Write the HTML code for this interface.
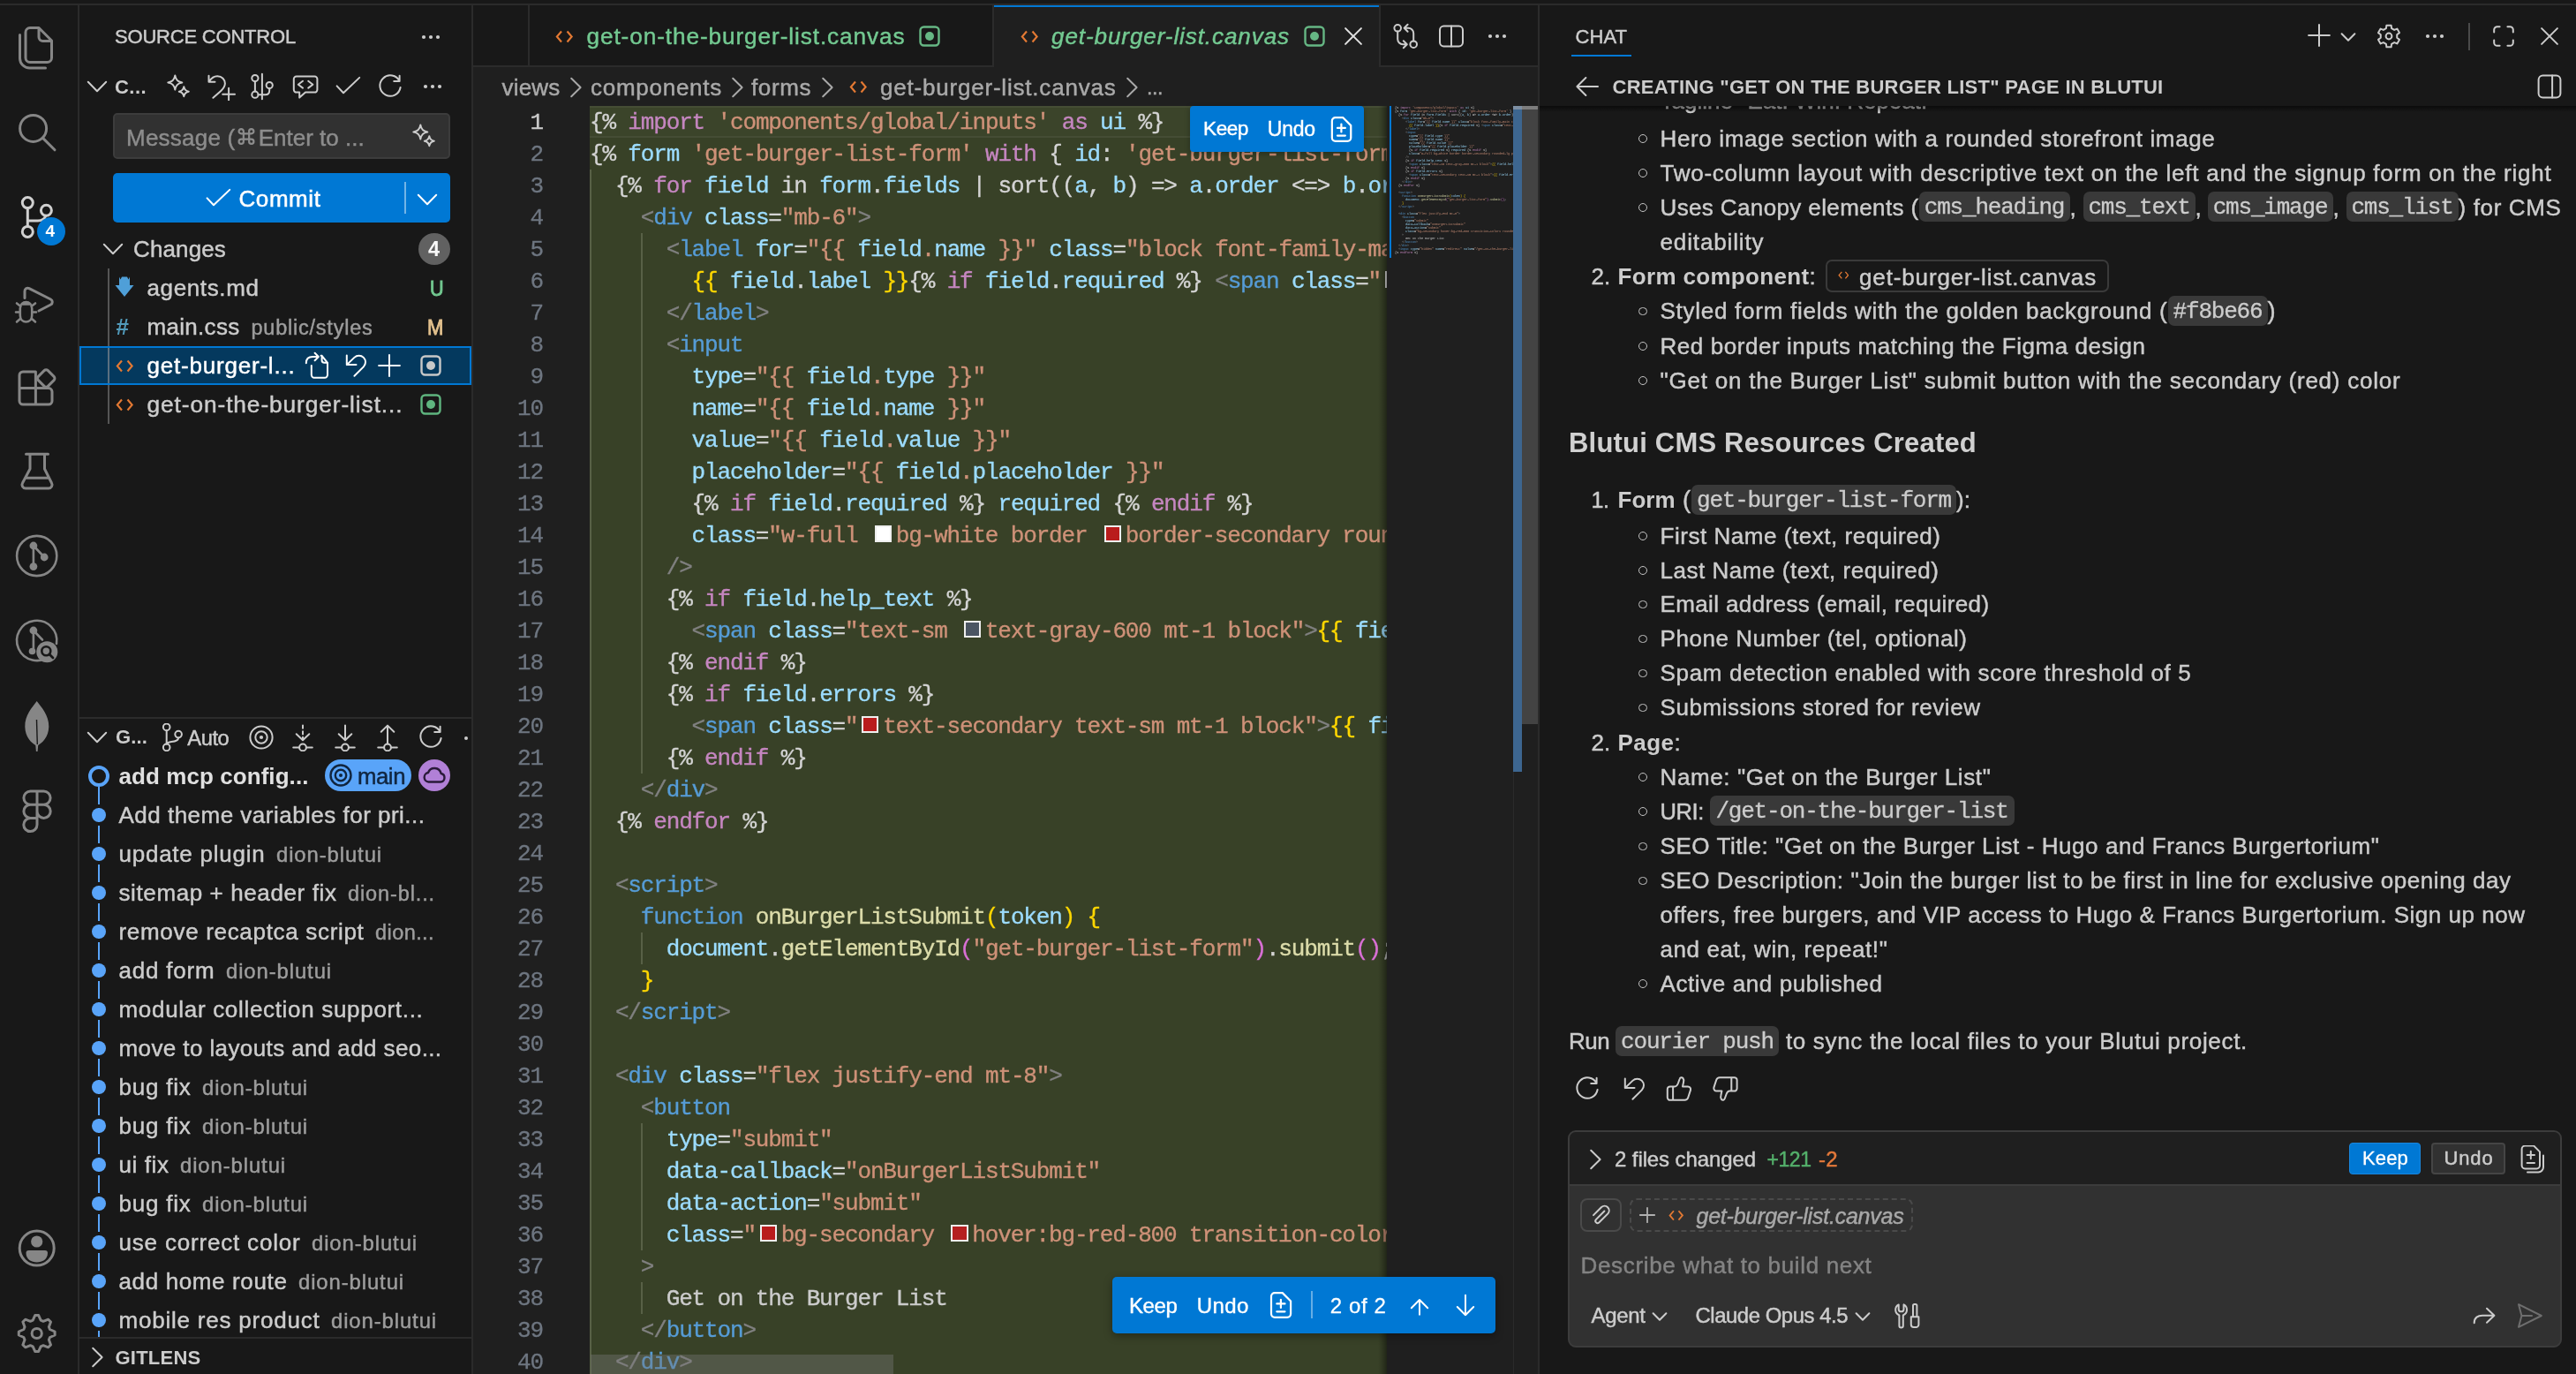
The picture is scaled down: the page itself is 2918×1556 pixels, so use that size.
<!DOCTYPE html>
<html lang="en"><head><meta charset="utf-8"><title>VS Code</title><style>
html,body{margin:0;padding:0;background:#181818;}
body{width:2918px;height:1556px;overflow:hidden;font-family:'Liberation Sans', sans-serif;}
#root{position:relative;width:2918px;height:1556px;overflow:hidden;background:#181818;will-change:transform;}
#root div,#root span.t,#root svg{position:absolute;box-sizing:border-box;}
#root span.t{display:block;}
#root .rel,#root .rel *{position:static;}
.cd{color:#d4d4d4}.ck{color:#c586c0}.cs{color:#ce9178}.cv{color:#9cdcfe}.cp{color:#d4d4d4}.ct{color:#569cd6}.cb{color:#808080}.ca{color:#9cdcfe}.cy{color:#ffd700}.cf{color:#dcdcaa}.cm{color:#da70d6}.cw{color:#cccccc}.ck2{color:#d4d4d4}.cl{left:668px;height:36px;line-height:36px;font-size:26px;letter-spacing:-1.152px;white-space:pre;-webkit-text-stroke:0.35px;font-family:'Liberation Mono', monospace;overflow:hidden;width:903px;}.bx{display:inline-block;width:19.2px;height:19.2px;margin:0 4.8px;border:2.4px solid #eee;box-sizing:border-box;vertical-align:0px;}.ln{left:536px;width:79px;height:36px;line-height:36px;font-size:26px;letter-spacing:-1.152px;text-align:right;color:#6e7681;font-family:'Liberation Mono', monospace;-webkit-text-stroke:0.3px;}.chip{background:#393939;border-radius:7px;height:34px;}.mono{font-family:'Liberation Mono', monospace;}</style></head>
<body><div id="root">
<div style="left:0px;top:0px;width:2918px;height:4px;background:#181818;"></div><div style="left:0px;top:4px;width:2918px;height:2px;background:#2b2b2b;"></div><div style="left:88px;top:6px;width:2px;height:1550px;background:#2b2b2b;"></div><div style="left:534px;top:6px;width:2px;height:1550px;background:#2b2b2b;"></div><div style="left:536px;top:6px;width:1206px;height:68px;background:#181818;"></div><div style="left:536px;top:74px;width:1206px;height:2px;background:#2b2b2b;"></div><div style="left:536px;top:76px;width:1206px;height:1480px;background:#1f1f1f;"></div><div style="left:1742px;top:6px;width:2px;height:1550px;background:#2b2b2b;"></div><svg style="left:0px;top:0px;" width="88" height="1556" viewBox="0 0 88 1556" fill="none"><path d="M44 31.5 H34 A5 5 0 0 0 29 36.5 V65.5 A5 5 0 0 0 34 70.5 H53.5 A5 5 0 0 0 58.5 65.5 V46 L44 31.5 V42 A4.5 4.5 0 0 0 48.5 46.5 H58" stroke="#868686" stroke-width="3" stroke-linecap="round" stroke-linejoin="round" fill="none"/><path d="M22.5 39.5 V66 A11 11 0 0 0 33.5 77 H51.5" stroke="#868686" stroke-width="3" stroke-linecap="round" stroke-linejoin="round" fill="none"/><circle cx="37.6" cy="145.4" r="15" stroke="#868686" stroke-width="3" stroke-linecap="round" stroke-linejoin="round" fill="none"/><path d="M48.8 156.6 L62 169.8" stroke="#868686" stroke-width="3" stroke-linecap="round" stroke-linejoin="round" fill="none"/><circle cx="31.3" cy="229.6" r="6" stroke="#d0d0d0" stroke-width="3" stroke-linecap="round" stroke-linejoin="round" fill="none"/><circle cx="31.3" cy="262.4" r="6" stroke="#d0d0d0" stroke-width="3" stroke-linecap="round" stroke-linejoin="round" fill="none"/><circle cx="52.4" cy="238.3" r="6" stroke="#d0d0d0" stroke-width="3" stroke-linecap="round" stroke-linejoin="round" fill="none"/><path d="M31.3 235.6 V256.4 M31.3 250 H43 C48 250 50.5 248 52 244.3" stroke="#d0d0d0" stroke-width="3" stroke-linecap="round" stroke-linejoin="round" fill="none"/><path d="M28 337.5 V330 A3.5 3.5 0 0 1 33 326.6 L57.5 339 A3.4 3.4 0 0 1 57.5 345 L44 352" stroke="#868686" stroke-width="3" stroke-linecap="round" stroke-linejoin="round" fill="none"/><path d="M22.8 349.5 C22.8 339.5 36.2 339.5 36.2 349.5 V357 C36.2 367 22.8 367 22.8 357 Z M24.5 344.5 H34.5 M22.8 353.5 H18 M36.2 353.5 H41 M23.5 347 L19 343.5 M35.5 347 L40 343.5 M23.5 360.5 L19 364.5 M35.5 360.5 L40 364.5" stroke="#868686" stroke-width="2.6" stroke-linecap="round" stroke-linejoin="round" fill="none"/><path d="M40.4 421 H26 A4 4 0 0 0 22 425 V454 A4 4 0 0 0 26 458 H55 A4 4 0 0 0 59 454 V443.5 A4 4 0 0 0 55 439.6 H22 M40.4 421 V458" stroke="#868686" stroke-width="3" stroke-linecap="round" stroke-linejoin="round" fill="none"/><rect x="44.5" y="420.8" width="15.5" height="15.5" rx="3" transform="rotate(45 52.3 428.5)" stroke="#868686" stroke-width="3" stroke-linecap="round" stroke-linejoin="round" fill="none"/><path d="M29.5 514.3 H54.5 M34 514.3 V531 L25.5 547 A4 4 0 0 0 29 553 H55 A4 4 0 0 0 58.5 547 L50.5 531 V514.3 M29.5 541.2 H54.5" stroke="#868686" stroke-width="3" stroke-linecap="round" stroke-linejoin="round" fill="none"/><circle cx="41.7" cy="629.5" r="22.6" stroke="#868686" stroke-width="2.6" fill="none" stroke-linecap="round"/><circle cx="37.9" cy="618" r="4.4" fill="#868686"/><circle cx="37.9" cy="641.6" r="4.4" fill="#868686"/><circle cx="50.2" cy="631" r="4.4" fill="#868686"/><path d="M37.9 618 V641.6 M37.9 618 L50.2 631" stroke="#868686" stroke-width="2.6" fill="none" stroke-linecap="round"/><path d="M56.5 742.5 A22.6 22.6 0 1 1 64 729" stroke="#868686" stroke-width="2.6" fill="none" stroke-linecap="round" transform="rotate(0)"/><circle cx="37.9" cy="714" r="4.4" fill="#868686"/><circle cx="36.5" cy="737.5" r="3.8" fill="#868686"/><path d="M37.9 714 V737 M37.9 714 L48 724.5" stroke="#868686" stroke-width="2.6" fill="none" stroke-linecap="round"/><circle cx="53.3" cy="738.2" r="12" fill="#868686"/><circle cx="52.3" cy="737.2" r="5" stroke="#181818" stroke-width="2.6" fill="none"/><path d="M56 741 L60 745" stroke="#181818" stroke-width="2.8" stroke-linecap="round"/><path d="M41.7 794 C47 801 55.5 810 55.3 823 C55 835 47.5 841.5 43.2 844 L42.6 851 H40.9 L40.3 844 C36 841.5 28.5 835 28.3 823 C28 810 36.5 801 41.7 794 Z" fill="#868686"/><path d="M41.5 815 L42.3 843" stroke="#181818" stroke-width="1.4"/><path d="M42 896 H34.5 A7.6 7.6 0 0 0 34.5 911.2 A7.6 7.6 0 0 0 34.5 926.4 A7.6 7.6 0 1 0 42 934 V896 H49.5 A7.6 7.6 0 0 1 49.5 911.2 H34.5 M42 926.4 H34.5 M49.5 911.2 A7.6 7.6 0 1 1 42 918.8" stroke="#868686" stroke-width="3" fill="none" stroke-linejoin="round"/><circle cx="41.7" cy="1413.6" r="19.5" stroke="#868686" stroke-width="3" stroke-linecap="round" stroke-linejoin="round" fill="none"/><circle cx="41.7" cy="1406" r="6.6" fill="#868686"/><path d="M29.5 1419 A3 3 0 0 1 32.5 1416 H51 A3 3 0 0 1 54 1419 C54 1426 48 1429.5 41.7 1429.5 C35.5 1429.5 29.5 1426 29.5 1419 Z" fill="#868686"/><path d="M39.7 1489.6 L43.7 1489.6 L46.2 1495.2 L49.0 1496.3 L54.7 1494.2 L57.5 1497.0 L55.4 1502.7 L56.5 1505.5 L62.1 1508.0 L62.1 1512.0 L56.5 1514.5 L55.4 1517.3 L57.5 1523.0 L54.7 1525.8 L49.0 1523.7 L46.2 1524.8 L43.7 1530.4 L39.7 1530.4 L37.2 1524.8 L34.4 1523.7 L28.7 1525.8 L25.9 1523.0 L28.0 1517.3 L26.9 1514.5 L21.3 1512.0 L21.3 1508.0 L26.9 1505.5 L28.0 1502.7 L25.9 1497.0 L28.7 1494.2 L34.4 1496.3 L37.2 1495.2 Z" stroke="#868686" stroke-width="3" stroke-linecap="round" stroke-linejoin="round" fill="none" stroke-linejoin="round"/><circle cx="41.7" cy="1510" r="5.6" stroke="#868686" stroke-width="3" stroke-linecap="round" stroke-linejoin="round" fill="none"/></svg><div style="left:42px;top:246px;width:32px;height:32px;border-radius:16px;background:#0078d4;"></div><span class="t" style="left:51.5px;top:250px;font-size:19px;line-height:24px;color:#fff;font-family:'Liberation Sans', sans-serif;white-space:pre;font-weight:700;">4</span><span class="t" style="left:130px;top:26.5px;font-size:22px;line-height:30px;color:#cccccc;font-family:'Liberation Sans', sans-serif;white-space:pre;-webkit-text-stroke:0.45px #cccccc;letter-spacing:-0.200px;">SOURCE CONTROL</span><svg style="left:472.0px;top:25.5px;" width="32" height="32" viewBox="0 0 16 16" fill="none"><circle cx="4" cy="8" r="1.05" fill="#cccccc"/><circle cx="8" cy="8" r="1.05" fill="#cccccc"/><circle cx="12" cy="8" r="1.05" fill="#cccccc"/></svg><svg style="left:94.0px;top:82.3px;" width="32" height="32" viewBox="0 0 16 16" fill="none"><path d="M2.9 5.4 L8 10.6 L13.1 5.4" stroke="#cccccc" stroke-width="1" stroke-linecap="round" stroke-linejoin="round"/></svg><span class="t" style="left:130px;top:83.5px;font-size:22px;line-height:30px;color:#cccccc;font-family:'Liberation Sans', sans-serif;white-space:pre;font-weight:700;letter-spacing:0.441px;">C...</span><svg style="left:185.7px;top:82.3px;" width="32" height="32" viewBox="0 0 16 16" fill="none"><path d="M6.15 1.75 C6.6 4.3 7.6 5.3 10.15 5.75 C7.6 6.2 6.6 7.2 6.15 9.75 C5.7 7.2 4.7 6.2 2.15 5.75 C4.7 5.3 5.7 4.3 6.15 1.75 Z M11.15 8.1 C11.45 9.9 12.1 10.55 13.9 10.85 C12.1 11.15 11.45 11.8 11.15 13.6 C10.85 11.8 10.2 11.15 8.4 10.85 C10.2 10.55 10.85 9.9 11.15 8.1 Z" stroke="#cccccc" stroke-width="1" stroke-linecap="round" stroke-linejoin="round"/></svg><svg style="left:234.9px;top:82.3px;" width="32" height="32" viewBox="0 0 16 16" fill="none"><path d="M0.75 1.85 V5.35 H4.25 M1 5.1 C2.2 3.2 3.6 2.1 5.6 2.1 C8.2 2.1 9.95 4 9.95 6.3 C9.95 8.2 8.9 9.3 7.6 10.5 L3.2 14.4 M12.05 8.9 V15.8 M8.6 12.35 H15.5" stroke="#cccccc" stroke-width="1" stroke-linecap="round" stroke-linejoin="round"/></svg><svg style="left:280.9px;top:82.3px;" width="32" height="32" viewBox="0 0 16 16" fill="none"><circle cx="3.95" cy="3.3" r="1.8" stroke="#cccccc" stroke-width="1" stroke-linecap="round" stroke-linejoin="round"/><circle cx="3.95" cy="12.6" r="1.8" stroke="#cccccc" stroke-width="1" stroke-linecap="round" stroke-linejoin="round"/><circle cx="12.1" cy="7.25" r="1.8" stroke="#cccccc" stroke-width="1" stroke-linecap="round" stroke-linejoin="round"/><path d="M3.95 5.1 V10.8 M7.95 0.85 V15.15 M12.1 9.05 V10.2 C12.1 11.6 11.2 12.6 9.8 12.6 H5.75" stroke="#cccccc" stroke-width="1" stroke-linecap="round" stroke-linejoin="round"/></svg><svg style="left:330.0px;top:82.3px;" width="32" height="32" viewBox="0 0 16 16" fill="none"><path d="M2.9 2.25 H13.2 A1.5 1.5 0 0 1 14.7 3.75 V9.8 A1.5 1.5 0 0 1 13.2 11.3 H8 L4.6 14.3 V11.3 H2.9 A1.5 1.5 0 0 1 1.4 9.8 V3.75 A1.5 1.5 0 0 1 2.9 2.25 Z M6.5 4.9 L3.9 6.85 L6.5 8.8 M9.6 4.9 L12.2 6.85 L9.6 8.8" stroke="#cccccc" stroke-width="1" stroke-linecap="round" stroke-linejoin="round"/></svg><svg style="left:377.7px;top:82.3px;" width="32" height="32" viewBox="0 0 16 16" fill="none"><path d="M1.8 7.7 L5.5 11.65 L14.6 2.95" stroke="#cccccc" stroke-width="1" stroke-linecap="round" stroke-linejoin="round"/></svg><svg style="left:425.9px;top:82.3px;" width="32" height="32" viewBox="0 0 16 16" fill="none"><path d="M13.8 8.5 A5.85 5.85 0 1 1 13.3 5 M13.3 1.9 V5 H10.1" stroke="#cccccc" stroke-width="1" stroke-linecap="round" stroke-linejoin="round"/></svg><svg style="left:474.0px;top:82.3px;" width="32" height="32" viewBox="0 0 16 16" fill="none"><circle cx="4" cy="8" r="1.05" fill="#cccccc"/><circle cx="8" cy="8" r="1.05" fill="#cccccc"/><circle cx="12" cy="8" r="1.05" fill="#cccccc"/></svg><div style="left:128px;top:128px;width:382px;height:52px;background:#313131;border:2px solid #3c3c3c;border-radius:5px;"></div><span class="t" style="left:143px;top:138.5px;font-size:26px;line-height:34px;color:#8c8c8c;font-family:'Liberation Sans', sans-serif;white-space:pre;-webkit-text-stroke:0.45px #8c8c8c;letter-spacing:0.234px;">Message (</span><svg style="left:268.3px;top:144px;" width="22" height="21" viewBox="0 0 20 20" fill="none"><path d="M7 7 H13 V13 H7 Z M7 7 V4.5 A2.5 2.5 0 1 0 4.5 7 H7 M13 7 H15.5 A2.5 2.5 0 1 0 13 4.5 V7 M13 13 V15.5 A2.5 2.5 0 1 0 15.5 13 H13 M7 13 H4.5 A2.5 2.5 0 1 0 7 15.5 V13" stroke="#8c8c8c" stroke-width="2.1" stroke-linejoin="round"/></svg><span class="t" style="left:292.7px;top:138.5px;font-size:26px;line-height:34px;color:#8c8c8c;font-family:'Liberation Sans', sans-serif;white-space:pre;-webkit-text-stroke:0.45px #8c8c8c;">Enter to ...</span><svg style="left:464.0px;top:137.8px;" width="32" height="32" viewBox="0 0 16 16" fill="none"><path d="M6.15 1.75 C6.6 4.3 7.6 5.3 10.15 5.75 C7.6 6.2 6.6 7.2 6.15 9.75 C5.7 7.2 4.7 6.2 2.15 5.75 C4.7 5.3 5.7 4.3 6.15 1.75 Z M11.15 8.1 C11.45 9.9 12.1 10.55 13.9 10.85 C12.1 11.15 11.45 11.8 11.15 13.6 C10.85 11.8 10.2 11.15 8.4 10.85 C10.2 10.55 10.85 9.9 11.15 8.1 Z" stroke="#cccccc" stroke-width="1" stroke-linecap="round" stroke-linejoin="round"/></svg><div style="left:128px;top:196px;width:382px;height:56px;background:#0078d4;border-radius:5px;"></div><svg style="left:231.0px;top:208.5px;" width="32" height="32" viewBox="0 0 16 16" fill="none"><path d="M1.8 7.7 L5.5 11.65 L14.6 2.95" stroke="#fff" stroke-width="1" stroke-linecap="round" stroke-linejoin="round"/></svg><span class="t" style="left:270.5px;top:208px;font-size:26px;line-height:34px;color:#fff;font-family:'Liberation Sans', sans-serif;white-space:pre;-webkit-text-stroke:0.5px #fff;letter-spacing:0.573px;">Commit</span><div style="left:458px;top:206px;width:2px;height:36px;background:rgba(255,255,255,0.45);"></div><svg style="left:468.0px;top:209.5px;" width="32" height="32" viewBox="0 0 16 16" fill="none"><path d="M2.9 5.4 L8 10.6 L13.1 5.4" stroke="#fff" stroke-width="1" stroke-linecap="round" stroke-linejoin="round"/></svg><svg style="left:111.5px;top:266.0px;" width="32" height="32" viewBox="0 0 16 16" fill="none"><path d="M2.9 5.4 L8 10.6 L13.1 5.4" stroke="#cccccc" stroke-width="1" stroke-linecap="round" stroke-linejoin="round"/></svg><span class="t" style="left:151px;top:265px;font-size:26px;line-height:34px;color:#cccccc;font-family:'Liberation Sans', sans-serif;white-space:pre;-webkit-text-stroke:0.45px #cccccc;letter-spacing:0.132px;">Changes</span><div style="left:474px;top:264px;width:36px;height:36px;border-radius:18px;background:#616161;"></div><span class="t" style="left:485px;top:268px;font-size:23.53px;line-height:28px;color:#f8f8f8;font-family:'Liberation Sans', sans-serif;white-space:pre;font-weight:700;letter-spacing:0.906px;">4</span><div style="left:122px;top:304px;width:2px;height:176px;background:#555555;"></div><svg style="left:130px;top:313px;" width="22" height="24" viewBox="0 0 22 24" fill="none"><path d="M5 0.5 L6.5 3.5 L8 0.5 H14 L15.5 3.5 L17 0.5 V10 H21.5 L11 23 L0.5 10 H5 Z" fill="#4f9fd8"/></svg><span class="t" style="left:166.5px;top:309px;font-size:26px;line-height:34px;color:#cccccc;font-family:'Liberation Sans', sans-serif;white-space:pre;-webkit-text-stroke:0.45px #cccccc;letter-spacing:0.622px;">agents.md</span><span class="t" style="left:487.2px;top:309.5px;font-size:24px;line-height:34px;color:#73c991;font-family:'Liberation Sans', sans-serif;white-space:pre;-webkit-text-stroke:0.9px #73c991;transform:scaleX(0.9);transform-origin:0 0;">U</span><span class="t" style="left:131.5px;top:353px;font-size:26px;line-height:34px;color:#519aba;font-family:'Liberation Sans', sans-serif;white-space:pre;font-weight:700;">#</span><span class="t" style="left:166.5px;top:353px;font-size:26px;line-height:34px;color:#cccccc;font-family:'Liberation Sans', sans-serif;white-space:pre;-webkit-text-stroke:0.45px #cccccc;letter-spacing:0.303px;">main.css</span><span class="t" style="left:284.5px;top:354px;font-size:23.5px;line-height:34px;color:#9d9d9d;font-family:'Liberation Sans', sans-serif;white-space:pre;-webkit-text-stroke:0.45px #9d9d9d;letter-spacing:0.769px;">public/styles</span><span class="t" style="left:484.3px;top:353.5px;font-size:24px;line-height:34px;color:#e2c08d;font-family:'Liberation Sans', sans-serif;white-space:pre;-webkit-text-stroke:0.9px #e2c08d;transform:scaleX(0.92);transform-origin:0 0;">M</span><div style="left:90px;top:392px;width:444px;height:44px;background:#04395e;border:2px solid #0078d4;"></div><div style="left:122px;top:394px;width:2px;height:40px;background:#5a6f80;"></div><svg style="left:130.75px;top:406.5px;" width="20.5" height="15.0" viewBox="0 0 22 16" fill="none"><path d="M7.5 1.5 L2 8 L7.5 14.5 M14.5 1.5 L20 8 L14.5 14.5" stroke="#e37933" stroke-width="2.3" stroke-linecap="butt" stroke-linejoin="miter" fill="none"/></svg><span class="t" style="left:166.5px;top:397px;font-size:26px;line-height:34px;color:#fff;font-family:'Liberation Sans', sans-serif;white-space:pre;-webkit-text-stroke:0.45px #fff;letter-spacing:0.795px;">get-burger-l...</span><svg style="left:343.0px;top:397.5px;" width="32" height="32" viewBox="0 0 16 16" fill="none"><path d="M4.9 8 V13.3 A1.6 1.6 0 0 0 6.5 14.9 H12.4 A1.6 1.6 0 0 0 14 13.3 V6.4 L10.8 2.4 H10.3 M10.8 2.4 V5 A1.4 1.4 0 0 0 12.2 6.4 H14 M1.9 6.6 C1.9 4.2 3.4 3 5.6 3 H8.7 M6.8 0.9 L8.9 3 L6.8 5.1" stroke="#fff" stroke-width="1" stroke-linecap="round" stroke-linejoin="round"/></svg><svg style="left:387.0px;top:397.5px;" width="32" height="32" viewBox="0 0 16 16" fill="none"><path d="M2.9 2.2 V7.55 H8.25 M2.9 7.55 L7.18 3.43 A3.7 3.7 0 0 1 12.42 8.67 L7.2 13.9" stroke="#fff" stroke-width="1" stroke-linecap="round" stroke-linejoin="round"/></svg><svg style="left:425.0px;top:398.0px;" width="32" height="32" viewBox="0 0 16 16" fill="none"><path d="M8 2.05 V13.95 M2.05 8 H13.95" stroke="#fff" stroke-width="1" stroke-linecap="round" stroke-linejoin="round"/></svg><svg style="left:476px;top:401.7px;" width="24" height="24" viewBox="0 0 24 24" fill="none"><rect x="1.5" y="1.5" width="21" height="21" rx="4" stroke="#c8c8c8" stroke-width="2.4" fill="none"/><circle cx="12" cy="12" r="5" fill="#c8c8c8"/></svg><svg style="left:130.75px;top:450.5px;" width="20.5" height="15.0" viewBox="0 0 22 16" fill="none"><path d="M7.5 1.5 L2 8 L7.5 14.5 M14.5 1.5 L20 8 L14.5 14.5" stroke="#e37933" stroke-width="2.3" stroke-linecap="butt" stroke-linejoin="miter" fill="none"/></svg><span class="t" style="left:166.5px;top:441px;font-size:26.3px;line-height:34px;color:#cccccc;font-family:'Liberation Sans', sans-serif;white-space:pre;-webkit-text-stroke:0.45px #cccccc;letter-spacing:0.901px;">get-on-the-burger-list...</span><svg style="left:476px;top:445.7px;" width="24" height="24" viewBox="0 0 24 24" fill="none"><rect x="1.5" y="1.5" width="21" height="21" rx="4" stroke="#5fb57f" stroke-width="2.4" fill="none"/><circle cx="12" cy="12" r="5" fill="#5fb57f"/></svg><div style="left:90px;top:812px;width:444px;height:2px;background:#2b2b2b;"></div><svg style="left:93.5px;top:819.0px;" width="32" height="32" viewBox="0 0 16 16" fill="none"><path d="M2.9 5.4 L8 10.6 L13.1 5.4" stroke="#cccccc" stroke-width="1" stroke-linecap="round" stroke-linejoin="round"/></svg><span class="t" style="left:131px;top:820px;font-size:22px;line-height:30px;color:#cccccc;font-family:'Liberation Sans', sans-serif;white-space:pre;font-weight:700;letter-spacing:0.137px;">G...</span><svg style="left:178.7px;top:819.0px;" width="32" height="32" viewBox="0 0 16 16" fill="none"><circle cx="4.85" cy="2.2" r="1.9" stroke="#cccccc" stroke-width="1" stroke-linecap="round" stroke-linejoin="round"/><circle cx="4.85" cy="13.7" r="1.9" stroke="#cccccc" stroke-width="1" stroke-linecap="round" stroke-linejoin="round"/><circle cx="11.55" cy="6.3" r="1.9" stroke="#cccccc" stroke-width="1" stroke-linecap="round" stroke-linejoin="round"/><path d="M4.85 4.1 V11.8 M11.55 8.2 C11.55 10 9.5 10.3 7.6 10.5 C6 10.7 5.2 11.1 4.85 11.8" stroke="#cccccc" stroke-width="1" stroke-linecap="round" stroke-linejoin="round"/></svg><span class="t" style="left:212.3px;top:819px;font-size:23.72px;line-height:34px;color:#cccccc;font-family:'Liberation Sans', sans-serif;white-space:pre;-webkit-text-stroke:0.45px #cccccc;letter-spacing:-0.449px;">Auto</span><svg style="left:279.8px;top:819.0px;" width="32" height="32" viewBox="0 0 16 16" fill="none"><circle cx="8" cy="8" r="6.3" stroke="#cccccc" stroke-width="1" stroke-linecap="round" stroke-linejoin="round"/><circle cx="8" cy="8" r="3.35" stroke="#cccccc" stroke-width="1" stroke-linecap="round" stroke-linejoin="round"/><circle cx="8" cy="8" r="1.05" fill="#cccccc"/></svg><svg style="left:326.8px;top:819.0px;" width="32" height="32" viewBox="0 0 16 16" fill="none"><path d="M8 1.3 V9.4" stroke="#cccccc" stroke-width="1" stroke-linecap="round" stroke-linejoin="round" stroke-dasharray="1.6 1.7"/><path d="M4.35 6.1 L8 9.6 L11.65 6.1 M2.6 13.7 H5.9 M10.1 13.7 H13.4" stroke="#cccccc" stroke-width="1" stroke-linecap="round" stroke-linejoin="round"/><circle cx="8" cy="13.7" r="1.95" stroke="#cccccc" stroke-width="1" stroke-linecap="round" stroke-linejoin="round"/></svg><svg style="left:374.5px;top:819.0px;" width="32" height="32" viewBox="0 0 16 16" fill="none"><path d="M8 1.3 V9.4 M4.35 6.1 L8 9.6 L11.65 6.1 M2.6 13.7 H5.9 M10.1 13.7 H13.4" stroke="#cccccc" stroke-width="1" stroke-linecap="round" stroke-linejoin="round"/><circle cx="8" cy="13.7" r="1.95" stroke="#cccccc" stroke-width="1" stroke-linecap="round" stroke-linejoin="round"/></svg><svg style="left:422.5px;top:819.0px;" width="32" height="32" viewBox="0 0 16 16" fill="none"><path d="M8 11.7 V1.5 M4.35 4.9 L8 1.3 L11.65 4.9 M2.6 13.7 H5.9 M10.1 13.7 H13.4" stroke="#cccccc" stroke-width="1" stroke-linecap="round" stroke-linejoin="round"/><circle cx="8" cy="13.7" r="1.95" stroke="#cccccc" stroke-width="1" stroke-linecap="round" stroke-linejoin="round"/></svg><svg style="left:472.0px;top:819.0px;" width="32" height="32" viewBox="0 0 16 16" fill="none"><path d="M13.8 8.5 A5.85 5.85 0 1 1 13.3 5 M13.3 1.9 V5 H10.1" stroke="#cccccc" stroke-width="1" stroke-linecap="round" stroke-linejoin="round"/></svg><div style="left:525.5px;top:833.5px;width:4.2px;height:4.2px;border-radius:2.1px;background:#ccc;"></div><div style="left:111px;top:891px;width:2px;height:624px;background:#59a4f9;"></div><div style="left:100px;top:867px;width:24px;height:24px;border-radius:12px;border:4px solid #59a4f9;background:#181818;"></div><span class="t" style="left:134.5px;top:862px;font-size:26px;line-height:34px;color:#e0e0e0;font-family:'Liberation Sans', sans-serif;white-space:pre;font-weight:700;letter-spacing:0.071px;">add mcp config...</span><div style="left:104px;top:915px;width:16px;height:16px;border-radius:8px;background:#59a4f9;"></div><span class="t" style="left:134.5px;top:906px;font-size:26px;line-height:34px;color:#cccccc;font-family:'Liberation Sans', sans-serif;white-space:pre;-webkit-text-stroke:0.45px #cccccc;letter-spacing:0.487px;">Add theme variables for pri...</span><div style="left:104px;top:959px;width:16px;height:16px;border-radius:8px;background:#59a4f9;"></div><span class="t" style="left:134.5px;top:950px;font-size:26px;line-height:34px;color:#cccccc;font-family:'Liberation Sans', sans-serif;white-space:pre;-webkit-text-stroke:0.45px #cccccc;letter-spacing:0.758px;">update plugin</span><span class="t" style="left:313.0px;top:951px;font-size:23.86px;line-height:34px;color:#9d9d9d;font-family:'Liberation Sans', sans-serif;white-space:pre;-webkit-text-stroke:0.45px #9d9d9d;letter-spacing:0.901px;">dion-blutui</span><div style="left:104px;top:1003px;width:16px;height:16px;border-radius:8px;background:#59a4f9;"></div><span class="t" style="left:134.5px;top:994px;font-size:26px;line-height:34px;color:#cccccc;font-family:'Liberation Sans', sans-serif;white-space:pre;-webkit-text-stroke:0.45px #cccccc;letter-spacing:0.607px;">sitemap + header fix</span><span class="t" style="left:394.0px;top:995px;font-size:23.5px;line-height:34px;color:#9d9d9d;font-family:'Liberation Sans', sans-serif;white-space:pre;-webkit-text-stroke:0.45px #9d9d9d;letter-spacing:0.886px;">dion-bl...</span><div style="left:104px;top:1047px;width:16px;height:16px;border-radius:8px;background:#59a4f9;"></div><span class="t" style="left:134.5px;top:1038px;font-size:26px;line-height:34px;color:#cccccc;font-family:'Liberation Sans', sans-serif;white-space:pre;-webkit-text-stroke:0.45px #cccccc;letter-spacing:0.683px;">remove recaptca script</span><span class="t" style="left:425.0px;top:1039px;font-size:23.5px;line-height:34px;color:#9d9d9d;font-family:'Liberation Sans', sans-serif;white-space:pre;-webkit-text-stroke:0.45px #9d9d9d;letter-spacing:0.424px;">dion...</span><div style="left:104px;top:1091px;width:16px;height:16px;border-radius:8px;background:#59a4f9;"></div><span class="t" style="left:134.5px;top:1082px;font-size:26px;line-height:34px;color:#cccccc;font-family:'Liberation Sans', sans-serif;white-space:pre;-webkit-text-stroke:0.45px #cccccc;letter-spacing:0.799px;">add form</span><span class="t" style="left:256.0px;top:1083px;font-size:23.86px;line-height:34px;color:#9d9d9d;font-family:'Liberation Sans', sans-serif;white-space:pre;-webkit-text-stroke:0.45px #9d9d9d;letter-spacing:0.901px;">dion-blutui</span><div style="left:104px;top:1135px;width:16px;height:16px;border-radius:8px;background:#59a4f9;"></div><span class="t" style="left:134.5px;top:1126px;font-size:26px;line-height:34px;color:#cccccc;font-family:'Liberation Sans', sans-serif;white-space:pre;-webkit-text-stroke:0.45px #cccccc;letter-spacing:0.684px;">modular collection support...</span><div style="left:104px;top:1179px;width:16px;height:16px;border-radius:8px;background:#59a4f9;"></div><span class="t" style="left:134.5px;top:1170px;font-size:26px;line-height:34px;color:#cccccc;font-family:'Liberation Sans', sans-serif;white-space:pre;-webkit-text-stroke:0.45px #cccccc;letter-spacing:0.396px;">move to layouts and add seo...</span><div style="left:104px;top:1223px;width:16px;height:16px;border-radius:8px;background:#59a4f9;"></div><span class="t" style="left:134.5px;top:1214px;font-size:26px;line-height:34px;color:#cccccc;font-family:'Liberation Sans', sans-serif;white-space:pre;-webkit-text-stroke:0.45px #cccccc;letter-spacing:0.770px;">bug fix</span><span class="t" style="left:229.0px;top:1215px;font-size:23.86px;line-height:34px;color:#9d9d9d;font-family:'Liberation Sans', sans-serif;white-space:pre;-webkit-text-stroke:0.45px #9d9d9d;letter-spacing:0.901px;">dion-blutui</span><div style="left:104px;top:1267px;width:16px;height:16px;border-radius:8px;background:#59a4f9;"></div><span class="t" style="left:134.5px;top:1258px;font-size:26px;line-height:34px;color:#cccccc;font-family:'Liberation Sans', sans-serif;white-space:pre;-webkit-text-stroke:0.45px #cccccc;letter-spacing:0.770px;">bug fix</span><span class="t" style="left:229.0px;top:1259px;font-size:23.86px;line-height:34px;color:#9d9d9d;font-family:'Liberation Sans', sans-serif;white-space:pre;-webkit-text-stroke:0.45px #9d9d9d;letter-spacing:0.901px;">dion-blutui</span><div style="left:104px;top:1311px;width:16px;height:16px;border-radius:8px;background:#59a4f9;"></div><span class="t" style="left:134.5px;top:1302px;font-size:26px;line-height:34px;color:#cccccc;font-family:'Liberation Sans', sans-serif;white-space:pre;-webkit-text-stroke:0.45px #cccccc;letter-spacing:0.589px;">ui fix</span><span class="t" style="left:204.0px;top:1303px;font-size:23.86px;line-height:34px;color:#9d9d9d;font-family:'Liberation Sans', sans-serif;white-space:pre;-webkit-text-stroke:0.45px #9d9d9d;letter-spacing:0.901px;">dion-blutui</span><div style="left:104px;top:1355px;width:16px;height:16px;border-radius:8px;background:#59a4f9;"></div><span class="t" style="left:134.5px;top:1346px;font-size:26px;line-height:34px;color:#cccccc;font-family:'Liberation Sans', sans-serif;white-space:pre;-webkit-text-stroke:0.45px #cccccc;letter-spacing:0.770px;">bug fix</span><span class="t" style="left:229.0px;top:1347px;font-size:23.86px;line-height:34px;color:#9d9d9d;font-family:'Liberation Sans', sans-serif;white-space:pre;-webkit-text-stroke:0.45px #9d9d9d;letter-spacing:0.901px;">dion-blutui</span><div style="left:104px;top:1399px;width:16px;height:16px;border-radius:8px;background:#59a4f9;"></div><span class="t" style="left:134.5px;top:1390px;font-size:26px;line-height:34px;color:#cccccc;font-family:'Liberation Sans', sans-serif;white-space:pre;-webkit-text-stroke:0.45px #cccccc;letter-spacing:0.812px;">use correct color</span><span class="t" style="left:353.0px;top:1391px;font-size:23.86px;line-height:34px;color:#9d9d9d;font-family:'Liberation Sans', sans-serif;white-space:pre;-webkit-text-stroke:0.45px #9d9d9d;letter-spacing:0.901px;">dion-blutui</span><div style="left:104px;top:1443px;width:16px;height:16px;border-radius:8px;background:#59a4f9;"></div><span class="t" style="left:134.5px;top:1434px;font-size:26px;line-height:34px;color:#cccccc;font-family:'Liberation Sans', sans-serif;white-space:pre;-webkit-text-stroke:0.45px #cccccc;letter-spacing:0.633px;">add home route</span><span class="t" style="left:338.0px;top:1435px;font-size:23.86px;line-height:34px;color:#9d9d9d;font-family:'Liberation Sans', sans-serif;white-space:pre;-webkit-text-stroke:0.45px #9d9d9d;letter-spacing:0.901px;">dion-blutui</span><div style="left:104px;top:1487px;width:16px;height:16px;border-radius:8px;background:#59a4f9;"></div><span class="t" style="left:134.5px;top:1478px;font-size:26px;line-height:34px;color:#cccccc;font-family:'Liberation Sans', sans-serif;white-space:pre;-webkit-text-stroke:0.45px #cccccc;letter-spacing:0.784px;">mobile res product</span><span class="t" style="left:375.0px;top:1479px;font-size:23.86px;line-height:34px;color:#9d9d9d;font-family:'Liberation Sans', sans-serif;white-space:pre;-webkit-text-stroke:0.45px #9d9d9d;letter-spacing:0.901px;">dion-blutui</span><div style="left:111px;top:911px;width:2px;height:4px;background:#181818;"></div><div style="left:111px;top:931px;width:2px;height:4px;background:#181818;"></div><div style="left:111px;top:955px;width:2px;height:4px;background:#181818;"></div><div style="left:111px;top:975px;width:2px;height:4px;background:#181818;"></div><div style="left:111px;top:999px;width:2px;height:4px;background:#181818;"></div><div style="left:111px;top:1019px;width:2px;height:4px;background:#181818;"></div><div style="left:111px;top:1043px;width:2px;height:4px;background:#181818;"></div><div style="left:111px;top:1063px;width:2px;height:4px;background:#181818;"></div><div style="left:111px;top:1087px;width:2px;height:4px;background:#181818;"></div><div style="left:111px;top:1107px;width:2px;height:4px;background:#181818;"></div><div style="left:111px;top:1131px;width:2px;height:4px;background:#181818;"></div><div style="left:111px;top:1151px;width:2px;height:4px;background:#181818;"></div><div style="left:111px;top:1175px;width:2px;height:4px;background:#181818;"></div><div style="left:111px;top:1195px;width:2px;height:4px;background:#181818;"></div><div style="left:111px;top:1219px;width:2px;height:4px;background:#181818;"></div><div style="left:111px;top:1239px;width:2px;height:4px;background:#181818;"></div><div style="left:111px;top:1263px;width:2px;height:4px;background:#181818;"></div><div style="left:111px;top:1283px;width:2px;height:4px;background:#181818;"></div><div style="left:111px;top:1307px;width:2px;height:4px;background:#181818;"></div><div style="left:111px;top:1327px;width:2px;height:4px;background:#181818;"></div><div style="left:111px;top:1351px;width:2px;height:4px;background:#181818;"></div><div style="left:111px;top:1371px;width:2px;height:4px;background:#181818;"></div><div style="left:111px;top:1395px;width:2px;height:4px;background:#181818;"></div><div style="left:111px;top:1415px;width:2px;height:4px;background:#181818;"></div><div style="left:111px;top:1439px;width:2px;height:4px;background:#181818;"></div><div style="left:111px;top:1459px;width:2px;height:4px;background:#181818;"></div><div style="left:111px;top:1483px;width:2px;height:4px;background:#181818;"></div><div style="left:111px;top:1503px;width:2px;height:4px;background:#181818;"></div><div style="left:367.5px;top:860px;width:98.5px;height:36px;border-radius:18px;background:#59a4f9;"></div><svg style="left:372px;top:864px;" width="28" height="28" viewBox="0 0 28 28" fill="none"><circle cx="14" cy="14" r="11.5" stroke="#10253f" stroke-width="2.4"/><circle cx="14" cy="14" r="6.2" stroke="#10253f" stroke-width="2.4"/><circle cx="14" cy="14" r="2" fill="#10253f"/></svg><span class="t" style="left:405px;top:861.5px;font-size:25.74px;line-height:34px;color:#10253f;font-family:'Liberation Sans', sans-serif;white-space:pre;-webkit-text-stroke:0.45px #10253f;letter-spacing:-0.445px;">main</span><div style="left:474px;top:860px;width:36px;height:36px;border-radius:18px;background:#b180d7;"></div><svg style="left:478px;top:866px;" width="28" height="24" viewBox="0 0 28 24" fill="none"><path d="M7.5 19.5 H21 A4.8 4.8 0 0 0 21.6 10 A7.6 7.6 0 0 0 7 9 A5.3 5.3 0 0 0 7.5 19.5 Z" stroke="#2a1a3a" stroke-width="2.4" stroke-linejoin="round"/></svg><div style="left:90px;top:1514px;width:444px;height:2px;background:#2b2b2b;"></div><svg style="left:94.0px;top:1521.0px;" width="32" height="32" viewBox="0 0 16 16" fill="none"><path d="M5.6 2.9 L10.8 8 L5.6 13.1" stroke="#cccccc" stroke-width="1" stroke-linecap="round" stroke-linejoin="round"/></svg><span class="t" style="left:130.5px;top:1522.5px;font-size:22px;line-height:30px;color:#cccccc;font-family:'Liberation Sans', sans-serif;white-space:pre;font-weight:700;letter-spacing:0.237px;">GITLENS</span><div style="left:598px;top:6px;width:2px;height:68px;background:#2b2b2b;"></div><div style="left:1124px;top:6px;width:2px;height:68px;background:#2b2b2b;"></div><div style="left:1126px;top:6px;width:436px;height:70px;background:#1f1f1f;"></div><div style="left:1126px;top:6px;width:436px;height:2px;background:#0078d4;"></div><div style="left:1562px;top:6px;width:2px;height:68px;background:#2b2b2b;"></div><svg style="left:629.25px;top:33.5px;" width="20.5" height="15.0" viewBox="0 0 22 16" fill="none"><path d="M7.5 1.5 L2 8 L7.5 14.5 M14.5 1.5 L20 8 L14.5 14.5" stroke="#e37933" stroke-width="2.3" stroke-linecap="butt" stroke-linejoin="miter" fill="none"/></svg><span class="t" style="left:664.5px;top:24px;font-size:26.2px;line-height:34px;color:#73c991;font-family:'Liberation Sans', sans-serif;white-space:pre;-webkit-text-stroke:0.45px #73c991;letter-spacing:0.904px;">get-on-the-burger-list.canvas</span><svg style="left:1040.5px;top:28.700000000000003px;" width="24" height="24" viewBox="0 0 24 24" fill="none"><rect x="1.5" y="1.5" width="21" height="21" rx="4" stroke="#66b784" stroke-width="2.4" fill="none"/><circle cx="12" cy="12" r="5" fill="#66b784"/></svg><svg style="left:1155.75px;top:33.5px;" width="20.5" height="15.0" viewBox="0 0 22 16" fill="none"><path d="M7.5 1.5 L2 8 L7.5 14.5 M14.5 1.5 L20 8 L14.5 14.5" stroke="#e37933" stroke-width="2.3" stroke-linecap="butt" stroke-linejoin="miter" fill="none"/></svg><span class="t" style="left:1191px;top:24px;font-size:26.07px;line-height:34px;color:#73c991;font-family:'Liberation Sans', sans-serif;white-space:pre;-webkit-text-stroke:0.45px #73c991;font-style:italic;letter-spacing:0.903px;">get-burger-list.canvas</span><svg style="left:1477px;top:28.700000000000003px;" width="24" height="24" viewBox="0 0 24 24" fill="none"><rect x="1.5" y="1.5" width="21" height="21" rx="4" stroke="#66b784" stroke-width="2.4" fill="none"/><circle cx="12" cy="12" r="5" fill="#66b784"/></svg><svg style="left:1517.0px;top:25.0px;" width="32" height="32" viewBox="0 0 16 16" fill="none"><path d="M3.55 3.55 L12.45 12.45 M12.45 3.55 L3.55 12.45" stroke="#e0e0e0" stroke-width="1" stroke-linecap="round" stroke-linejoin="round"/></svg><svg style="left:1576.0px;top:25.0px;" width="32" height="32" viewBox="0 0 16 16" fill="none"><circle cx="3.6" cy="3.4" r="1.9" stroke="#cccccc" stroke-width="1" stroke-linecap="round" stroke-linejoin="round"/><circle cx="12.6" cy="12.6" r="1.9" stroke="#cccccc" stroke-width="1" stroke-linecap="round" stroke-linejoin="round"/><path d="M3.6 5.3 V9.6 A3 3 0 0 0 6.6 12.6 H8.6 M6.9 10.6 L8.9 12.6 L6.9 14.6 M12.6 10.7 V6.4 A3 3 0 0 0 9.6 3.4 H7.6 M9.3 1.4 L7.3 3.4 L9.3 5.4" stroke="#cccccc" stroke-width="1" stroke-linecap="round" stroke-linejoin="round"/></svg><svg style="left:1628.0px;top:25.0px;" width="32" height="32" viewBox="0 0 16 16" fill="none"><rect x="1.5" y="2.3" width="13" height="11.4" rx="2.2" stroke="#cccccc" stroke-width="1" stroke-linecap="round" stroke-linejoin="round"/><path d="M8 2.3 V13.7" stroke="#cccccc" stroke-width="1" stroke-linecap="round" stroke-linejoin="round"/></svg><svg style="left:1680.0px;top:25.0px;" width="32" height="32" viewBox="0 0 16 16" fill="none"><circle cx="4" cy="8" r="1.05" fill="#cccccc"/><circle cx="8" cy="8" r="1.05" fill="#cccccc"/><circle cx="12" cy="8" r="1.05" fill="#cccccc"/></svg><span class="t" style="left:568.5px;top:82px;font-size:26px;line-height:34px;color:#a9a9a9;font-family:'Liberation Sans', sans-serif;white-space:pre;-webkit-text-stroke:0.45px #a9a9a9;letter-spacing:0.197px;">views</span><svg style="left:636.0px;top:83.0px;" width="32" height="32" viewBox="0 0 16 16" fill="none"><path d="M5.6 2.9 L10.8 8 L5.6 13.1" stroke="#a9a9a9" stroke-width="1" stroke-linecap="round" stroke-linejoin="round"/></svg><span class="t" style="left:669px;top:82px;font-size:26px;line-height:34px;color:#a9a9a9;font-family:'Liberation Sans', sans-serif;white-space:pre;-webkit-text-stroke:0.45px #a9a9a9;letter-spacing:0.734px;">components</span><svg style="left:819.0px;top:83.0px;" width="32" height="32" viewBox="0 0 16 16" fill="none"><path d="M5.6 2.9 L10.8 8 L5.6 13.1" stroke="#a9a9a9" stroke-width="1" stroke-linecap="round" stroke-linejoin="round"/></svg><span class="t" style="left:851px;top:82px;font-size:26px;line-height:34px;color:#a9a9a9;font-family:'Liberation Sans', sans-serif;white-space:pre;-webkit-text-stroke:0.45px #a9a9a9;letter-spacing:0.600px;">forms</span><svg style="left:920.5px;top:83.0px;" width="32" height="32" viewBox="0 0 16 16" fill="none"><path d="M5.6 2.9 L10.8 8 L5.6 13.1" stroke="#a9a9a9" stroke-width="1" stroke-linecap="round" stroke-linejoin="round"/></svg><svg style="left:961.75px;top:91.0px;" width="20.5" height="15.0" viewBox="0 0 22 16" fill="none"><path d="M7.5 1.5 L2 8 L7.5 14.5 M14.5 1.5 L20 8 L14.5 14.5" stroke="#e37933" stroke-width="2.3" stroke-linecap="butt" stroke-linejoin="miter" fill="none"/></svg><span class="t" style="left:997px;top:82px;font-size:26px;line-height:34px;color:#a9a9a9;font-family:'Liberation Sans', sans-serif;white-space:pre;-webkit-text-stroke:0.45px #a9a9a9;letter-spacing:0.795px;">get-burger-list.canvas</span><svg style="left:1266.0px;top:83.0px;" width="32" height="32" viewBox="0 0 16 16" fill="none"><path d="M5.6 2.9 L10.8 8 L5.6 13.1" stroke="#a9a9a9" stroke-width="1" stroke-linecap="round" stroke-linejoin="round"/></svg><span class="t" style="left:1299px;top:82px;font-size:23.21px;line-height:34px;color:#a9a9a9;font-family:'Liberation Sans', sans-serif;white-space:pre;-webkit-text-stroke:0.45px #a9a9a9;letter-spacing:-0.448px;">...</span><div style="left:668px;top:120px;width:903px;height:1436px;background:#384127;"></div><div style="left:668px;top:120px;width:903px;height:36px;background:#3b442a;border-top:2px solid #454d35;border-bottom:2px solid #454d35;"></div><div class="ln" style="top:121px;color:#ccc;">1</div><div class="cl" style="top:121px"><span class="cd">{% </span><span class="ck">import</span><span class="cs"> 'components/global/inputs' </span><span class="ck">as</span><span class="cv"> ui</span><span class="cd"> %}</span></div><div class="ln" style="top:157px;">2</div><div class="cl" style="top:157px"><span class="cd">{% </span><span class="cv">form</span><span class="cs"> 'get-burger-list-form' </span><span class="ck">with</span><span class="cp"> { </span><span class="cv">id</span><span class="cp">: </span><span class="cs">'get-burger-list-form'</span><span class="cp"> }</span></div><div class="ln" style="top:193px;">3</div><div class="cl" style="top:193px"><span class="cd">  {% </span><span class="ck">for</span><span class="cv"> field </span><span class="ck2">in</span><span class="cv"> form</span><span class="cp">.</span><span class="cv">fields</span><span class="cp"> | sort((</span><span class="cv">a</span><span class="cp">, </span><span class="cv">b</span><span class="cp">) =&gt; </span><span class="cv">a</span><span class="cp">.</span><span class="cv">order</span><span class="cp"> &lt;=&gt; </span><span class="cv">b</span><span class="cp">.</span><span class="cv">order</span></div><div class="ln" style="top:229px;">4</div><div class="cl" style="top:229px"><span class="cb">    &lt;</span><span class="ct">div</span><span class="ca"> class</span><span class="cp">=</span><span class="cs">"mb-6"</span><span class="cb">&gt;</span></div><div class="ln" style="top:265px;">5</div><div class="cl" style="top:265px"><span class="cb">      &lt;</span><span class="ct">label</span><span class="ca"> for</span><span class="cp">=</span><span class="cs">"{{ </span><span class="cv">field</span><span class="cs">.</span><span class="cv">name</span><span class="cs"> }}"</span><span class="ca"> class</span><span class="cp">=</span><span class="cs">"block font-family-main </span></div><div class="ln" style="top:301px;">6</div><div class="cl" style="top:301px"><span class="cy">        {{ </span><span class="cv">field</span><span class="cp">.</span><span class="cv">label</span><span class="cy"> }}</span><span class="cd">{% </span><span class="ck">if </span><span class="cv">field</span><span class="cp">.</span><span class="cv">required</span><span class="cd"> %} </span><span class="cb">&lt;</span><span class="ct">span</span><span class="ca"> class</span><span class="cp">=</span><span class="cs">"</span><span class="bx" style="background:#b91c1c"></span><span class="cs">te</span></div><div class="ln" style="top:337px;">7</div><div class="cl" style="top:337px"><span class="cb">      &lt;/</span><span class="ct">label</span><span class="cb">&gt;</span></div><div class="ln" style="top:373px;">8</div><div class="cl" style="top:373px"><span class="cb">      &lt;</span><span class="ct">input</span></div><div class="ln" style="top:409px;">9</div><div class="cl" style="top:409px"><span class="cp">        </span><span class="ca">type</span><span class="cp">=</span><span class="cs">"{{ </span><span class="cv">field</span><span class="cs">.</span><span class="cv">type</span><span class="cs"> }}"</span></div><div class="ln" style="top:445px;">10</div><div class="cl" style="top:445px"><span class="cp">        </span><span class="ca">name</span><span class="cp">=</span><span class="cs">"{{ </span><span class="cv">field</span><span class="cs">.</span><span class="cv">name</span><span class="cs"> }}"</span></div><div class="ln" style="top:481px;">11</div><div class="cl" style="top:481px"><span class="cp">        </span><span class="ca">value</span><span class="cp">=</span><span class="cs">"{{ </span><span class="cv">field</span><span class="cs">.</span><span class="cv">value</span><span class="cs"> }}"</span></div><div class="ln" style="top:517px;">12</div><div class="cl" style="top:517px"><span class="cp">        </span><span class="ca">placeholder</span><span class="cp">=</span><span class="cs">"{{ </span><span class="cv">field</span><span class="cs">.</span><span class="cv">placeholder</span><span class="cs"> }}"</span></div><div class="ln" style="top:553px;">13</div><div class="cl" style="top:553px"><span class="cd">        {% </span><span class="ck">if </span><span class="cv">field</span><span class="cp">.</span><span class="cv">required</span><span class="cd"> %} </span><span class="ca">required</span><span class="cd"> {% </span><span class="ck">endif</span><span class="cd"> %}</span></div><div class="ln" style="top:589px;">14</div><div class="cl" style="top:589px"><span class="ca">        class</span><span class="cp">=</span><span class="cs">"w-full </span><span class="bx" style="background:#ffffff"></span><span class="cs">bg-white border </span><span class="bx" style="background:#b91c1c"></span><span class="cs">border-secondary rounded</span></div><div class="ln" style="top:625px;">15</div><div class="cl" style="top:625px"><span class="cb">      /&gt;</span></div><div class="ln" style="top:661px;">16</div><div class="cl" style="top:661px"><span class="cd">      {% </span><span class="ck">if </span><span class="cv">field</span><span class="cp">.</span><span class="cv">help_text</span><span class="cd"> %}</span></div><div class="ln" style="top:697px;">17</div><div class="cl" style="top:697px"><span class="cb">        &lt;</span><span class="ct">span</span><span class="ca"> class</span><span class="cp">=</span><span class="cs">"text-sm </span><span class="bx" style="background:#4b5563"></span><span class="cs">text-gray-600 mt-1 block"</span><span class="cb">&gt;</span><span class="cy">{{ </span><span class="cv">field</span><span class="cp">.</span></div><div class="ln" style="top:733px;">18</div><div class="cl" style="top:733px"><span class="cd">      {% </span><span class="ck">endif</span><span class="cd"> %}</span></div><div class="ln" style="top:769px;">19</div><div class="cl" style="top:769px"><span class="cd">      {% </span><span class="ck">if </span><span class="cv">field</span><span class="cp">.</span><span class="cv">errors</span><span class="cd"> %}</span></div><div class="ln" style="top:805px;">20</div><div class="cl" style="top:805px"><span class="cb">        &lt;</span><span class="ct">span</span><span class="ca"> class</span><span class="cp">=</span><span class="cs">"</span><span class="bx" style="background:#b91c1c"></span><span class="cs">text-secondary text-sm mt-1 block"</span><span class="cb">&gt;</span><span class="cy">{{ </span><span class="cv">field</span></div><div class="ln" style="top:841px;">21</div><div class="cl" style="top:841px"><span class="cd">      {% </span><span class="ck">endif</span><span class="cd"> %}</span></div><div class="ln" style="top:877px;">22</div><div class="cl" style="top:877px"><span class="cb">    &lt;/</span><span class="ct">div</span><span class="cb">&gt;</span></div><div class="ln" style="top:913px;">23</div><div class="cl" style="top:913px"><span class="cd">  {% </span><span class="ck">endfor</span><span class="cd"> %}</span></div><div class="ln" style="top:949px;">24</div><div class="ln" style="top:985px;">25</div><div class="cl" style="top:985px"><span class="cb">  &lt;</span><span class="ct">script</span><span class="cb">&gt;</span></div><div class="ln" style="top:1021px;">26</div><div class="cl" style="top:1021px"><span class="ct">    function </span><span class="cf">onBurgerListSubmit</span><span class="cy">(</span><span class="cv">token</span><span class="cy">) {</span></div><div class="ln" style="top:1057px;">27</div><div class="cl" style="top:1057px"><span class="cv">      document</span><span class="cp">.</span><span class="cf">getElementById</span><span class="cm">(</span><span class="cs">"get-burger-list-form"</span><span class="cm">)</span><span class="cp">.</span><span class="cf">submit</span><span class="cm">()</span><span class="cp">;</span></div><div class="ln" style="top:1093px;">28</div><div class="cl" style="top:1093px"><span class="cy">    }</span></div><div class="ln" style="top:1129px;">29</div><div class="cl" style="top:1129px"><span class="cb">  &lt;/</span><span class="ct">script</span><span class="cb">&gt;</span></div><div class="ln" style="top:1165px;">30</div><div class="ln" style="top:1201px;">31</div><div class="cl" style="top:1201px"><span class="cb">  &lt;</span><span class="ct">div</span><span class="ca"> class</span><span class="cp">=</span><span class="cs">"flex justify-end mt-8"</span><span class="cb">&gt;</span></div><div class="ln" style="top:1237px;">32</div><div class="cl" style="top:1237px"><span class="cb">    &lt;</span><span class="ct">button</span></div><div class="ln" style="top:1273px;">33</div><div class="cl" style="top:1273px"><span class="ca">      type</span><span class="cp">=</span><span class="cs">"submit"</span></div><div class="ln" style="top:1309px;">34</div><div class="cl" style="top:1309px"><span class="ca">      data-callback</span><span class="cp">=</span><span class="cs">"onBurgerListSubmit"</span></div><div class="ln" style="top:1345px;">35</div><div class="cl" style="top:1345px"><span class="ca">      data-action</span><span class="cp">=</span><span class="cs">"submit"</span></div><div class="ln" style="top:1381px;">36</div><div class="cl" style="top:1381px"><span class="ca">      class</span><span class="cp">=</span><span class="cs">"</span><span class="bx" style="background:#b91c1c"></span><span class="cs">bg-secondary </span><span class="bx" style="background:#b52020"></span><span class="cs">hover:bg-red-800 transition-colors r</span></div><div class="ln" style="top:1417px;">37</div><div class="cl" style="top:1417px"><span class="cb">    &gt;</span></div><div class="ln" style="top:1453px;">38</div><div class="cl" style="top:1453px"><span class="cw">      Get on the Burger List</span></div><div class="ln" style="top:1489px;">39</div><div class="cl" style="top:1489px"><span class="cb">    &lt;/</span><span class="ct">button</span><span class="cb">&gt;</span></div><div class="ln" style="top:1525px;">40</div><div class="cl" style="top:1525px"><span class="cb">  &lt;/</span><span class="ct">div</span><span class="cb">&gt;</span></div><div style="left:668px;top:192px;width:2px;height:1364px;background:#586046;"></div><div style="left:726px;top:264px;width:2px;height:612px;background:#586046;"></div><div style="left:726px;top:1056px;width:2px;height:36px;background:#586046;"></div><div style="left:726px;top:1272px;width:2px;height:144px;background:#586046;"></div><div style="left:726px;top:1452px;width:2px;height:36px;background:#586046;"></div><div style="left:669px;top:1534px;width:343px;height:22px;background:rgba(121,121,121,0.4);"></div><div style="left:1561px;top:120px;width:10px;height:1436px;background:linear-gradient(90deg,rgba(0,0,0,0),rgba(0,0,0,0.12) 40%,rgba(0,0,0,0.42));"></div><div style="left:1571px;top:120px;width:143px;height:1436px;background:#1f1f1f;"></div><div style="left:1574px;top:120px;width:2px;height:172px;background:#0078d4;"></div><div style="left:1580px;top:120px;width:970px;height:1512px;transform-origin:0 0;transform:scale(0.1384,0.1111);opacity:0.75;-webkit-text-stroke:3px;"><div class="cl" style="left:0;top:0px;width:970px;"><span class="cd">{% </span><span class="ck">import</span><span class="cs"> 'components/global/inputs' </span><span class="ck">as</span><span class="cv"> ui</span><span class="cd"> %}</span></div><div class="cl" style="left:0;top:36px;width:970px;"><span class="cd">{% </span><span class="cv">form</span><span class="cs"> 'get-burger-list-form' </span><span class="ck">with</span><span class="cp"> { </span><span class="cv">id</span><span class="cp">: </span><span class="cs">'get-burger-list-form'</span><span class="cp"> } </span></div><div class="cl" style="left:0;top:72px;width:970px;"><span class="cd">  {% </span><span class="ck">for</span><span class="cv"> field </span><span class="ck2">in</span><span class="cv"> form</span><span class="cp">.</span><span class="cv">fields</span><span class="cp"> | sort((</span><span class="cv">a</span><span class="cp">, </span><span class="cv">b</span><span class="cp">) =&gt; </span><span class="cv">a</span><span class="cp">.</span><span class="cv">order</span><span class="cp"> &lt;=&gt; </span><span class="cv">b</span><span class="cp">.</span><span class="cv">order</span><span class="cp">)</span></div><div class="cl" style="left:0;top:108px;width:970px;"><span class="cb">    &lt;</span><span class="ct">div</span><span class="ca"> class</span><span class="cp">=</span><span class="cs">"mb-6"</span><span class="cb">&gt;</span></div><div class="cl" style="left:0;top:144px;width:970px;"><span class="cb">      &lt;</span><span class="ct">label</span><span class="ca"> for</span><span class="cp">=</span><span class="cs">"{{ </span><span class="cv">field</span><span class="cs">.</span><span class="cv">name</span><span class="cs"> }}"</span><span class="ca"> class</span><span class="cp">=</span><span class="cs">"block font-family-main t</span></div><div class="cl" style="left:0;top:180px;width:970px;"><span class="cy">        {{ </span><span class="cv">field</span><span class="cp">.</span><span class="cv">label</span><span class="cy"> }}</span><span class="cd">{% </span><span class="ck">if </span><span class="cv">field</span><span class="cp">.</span><span class="cv">required</span><span class="cd"> %} </span><span class="cb">&lt;</span><span class="ct">span</span><span class="ca"> class</span><span class="cp">=</span><span class="cs">"</span><span class="cs">text-</span></div><div class="cl" style="left:0;top:216px;width:970px;"><span class="cb">      &lt;/</span><span class="ct">label</span><span class="cb">&gt;</span></div><div class="cl" style="left:0;top:252px;width:970px;"><span class="cb">      &lt;</span><span class="ct">input</span></div><div class="cl" style="left:0;top:288px;width:970px;"><span class="cp">        </span><span class="ca">type</span><span class="cp">=</span><span class="cs">"{{ </span><span class="cv">field</span><span class="cs">.</span><span class="cv">type</span><span class="cs"> }}"</span></div><div class="cl" style="left:0;top:324px;width:970px;"><span class="cp">        </span><span class="ca">name</span><span class="cp">=</span><span class="cs">"{{ </span><span class="cv">field</span><span class="cs">.</span><span class="cv">name</span><span class="cs"> }}"</span></div><div class="cl" style="left:0;top:360px;width:970px;"><span class="cp">        </span><span class="ca">value</span><span class="cp">=</span><span class="cs">"{{ </span><span class="cv">field</span><span class="cs">.</span><span class="cv">value</span><span class="cs"> }}"</span></div><div class="cl" style="left:0;top:396px;width:970px;"><span class="cp">        </span><span class="ca">placeholder</span><span class="cp">=</span><span class="cs">"{{ </span><span class="cv">field</span><span class="cs">.</span><span class="cv">placeholder</span><span class="cs"> }}"</span></div><div class="cl" style="left:0;top:432px;width:970px;"><span class="cd">        {% </span><span class="ck">if </span><span class="cv">field</span><span class="cp">.</span><span class="cv">required</span><span class="cd"> %} </span><span class="ca">required</span><span class="cd"> {% </span><span class="ck">endif</span><span class="cd"> %}</span></div><div class="cl" style="left:0;top:468px;width:970px;"><span class="ca">        class</span><span class="cp">=</span><span class="cs">"w-full </span><span class="cs">bg-white border </span><span class="cs">border-secondary rounded-lg p</span></div><div class="cl" style="left:0;top:504px;width:970px;"><span class="cb">      /&gt;</span></div><div class="cl" style="left:0;top:540px;width:970px;"><span class="cd">      {% </span><span class="ck">if </span><span class="cv">field</span><span class="cp">.</span><span class="cv">help_text</span><span class="cd"> %}</span></div><div class="cl" style="left:0;top:576px;width:970px;"><span class="cb">        &lt;</span><span class="ct">span</span><span class="ca"> class</span><span class="cp">=</span><span class="cs">"text-sm </span><span class="cs">text-gray-600 mt-1 block"</span><span class="cb">&gt;</span><span class="cy">{{ </span><span class="cv">field</span><span class="cp">.</span><span class="cv">hel</span></div><div class="cl" style="left:0;top:612px;width:970px;"><span class="cd">      {% </span><span class="ck">endif</span><span class="cd"> %}</span></div><div class="cl" style="left:0;top:648px;width:970px;"><span class="cd">      {% </span><span class="ck">if </span><span class="cv">field</span><span class="cp">.</span><span class="cv">errors</span><span class="cd"> %}</span></div><div class="cl" style="left:0;top:684px;width:970px;"><span class="cb">        &lt;</span><span class="ct">span</span><span class="ca"> class</span><span class="cp">=</span><span class="cs">"</span><span class="cs">text-secondary text-sm mt-1 block"</span><span class="cb">&gt;</span><span class="cy">{{ </span><span class="cv">field</span><span class="cp">.</span><span class="cv">er</span></div><div class="cl" style="left:0;top:720px;width:970px;"><span class="cd">      {% </span><span class="ck">endif</span><span class="cd"> %}</span></div><div class="cl" style="left:0;top:756px;width:970px;"><span class="cb">    &lt;/</span><span class="ct">div</span><span class="cb">&gt;</span></div><div class="cl" style="left:0;top:792px;width:970px;"><span class="cd">  {% </span><span class="ck">endfor</span><span class="cd"> %}</span></div><div class="cl" style="left:0;top:864px;width:970px;"><span class="cb">  &lt;</span><span class="ct">script</span><span class="cb">&gt;</span></div><div class="cl" style="left:0;top:900px;width:970px;"><span class="ct">    function </span><span class="cf">onBurgerListSubmit</span><span class="cy">(</span><span class="cv">token</span><span class="cy">) {</span></div><div class="cl" style="left:0;top:936px;width:970px;"><span class="cv">      document</span><span class="cp">.</span><span class="cf">getElementById</span><span class="cm">(</span><span class="cs">"get-burger-list-form"</span><span class="cm">)</span><span class="cp">.</span><span class="cf">submit</span><span class="cm">()</span><span class="cp">;</span></div><div class="cl" style="left:0;top:972px;width:970px;"><span class="cy">    }</span></div><div class="cl" style="left:0;top:1008px;width:970px;"><span class="cb">  &lt;/</span><span class="ct">script</span><span class="cb">&gt;</span></div><div class="cl" style="left:0;top:1080px;width:970px;"><span class="cb">  &lt;</span><span class="ct">div</span><span class="ca"> class</span><span class="cp">=</span><span class="cs">"flex justify-end mt-8"</span><span class="cb">&gt;</span></div><div class="cl" style="left:0;top:1116px;width:970px;"><span class="cb">    &lt;</span><span class="ct">button</span></div><div class="cl" style="left:0;top:1152px;width:970px;"><span class="ca">      type</span><span class="cp">=</span><span class="cs">"submit"</span></div><div class="cl" style="left:0;top:1188px;width:970px;"><span class="ca">      data-callback</span><span class="cp">=</span><span class="cs">"onBurgerListSubmit"</span></div><div class="cl" style="left:0;top:1224px;width:970px;"><span class="ca">      data-action</span><span class="cp">=</span><span class="cs">"submit"</span></div><div class="cl" style="left:0;top:1260px;width:970px;"><span class="ca">      class</span><span class="cp">=</span><span class="cs">"</span><span class="cs">bg-secondary </span><span class="cs">hover:bg-red-800 transition-colors rounde</span></div><div class="cl" style="left:0;top:1296px;width:970px;"><span class="cb">    &gt;</span></div><div class="cl" style="left:0;top:1332px;width:970px;"><span class="cw">      Get on the Burger List</span></div><div class="cl" style="left:0;top:1368px;width:970px;"><span class="cb">    &lt;/</span><span class="ct">button</span><span class="cb">&gt;</span></div><div class="cl" style="left:0;top:1404px;width:970px;"><span class="cb">  &lt;/</span><span class="ct">div</span><span class="cb">&gt;</span></div><div class="cl" style="left:0;top:1440px;width:970px;"><span class="cb">  &lt;</span><span class="ct">input</span><span class="ca"> type</span><span class="cp">=</span><span class="cs">"hidden"</span><span class="ca"> name</span><span class="cp">=</span><span class="cs">"redirect"</span><span class="ca"> value</span><span class="cp">=</span><span class="cs">"/get-on-the-burger-li</span></div><div class="cl" style="left:0;top:1476px;width:970px;"><span class="cd">{% </span><span class="ck">endform</span><span class="cd"> %}</span></div></div><div style="left:1714px;top:120px;width:1px;height:1436px;background:#2a2a2a;"></div><div style="left:1714px;top:120px;width:10px;height:754px;background:#3d6690;"></div><div style="left:1724px;top:120px;width:18px;height:700px;background:#434343;"></div><div style="left:1714px;top:120px;width:28px;height:4px;background:#7d7d7d;"></div><div style="left:1714px;top:120px;width:10px;height:4px;background:#7d8fa3;"></div><div style="left:1348px;top:120px;width:197px;height:52px;background:#0078d4;border-radius:4px;box-shadow:0 2px 6px rgba(0,0,0,0.3);"></div><span class="t" style="left:1363px;top:129px;font-size:22.61px;line-height:34px;color:#fff;font-family:'Liberation Sans', sans-serif;white-space:pre;-webkit-text-stroke:0.4px #fff;letter-spacing:-0.453px;">Keep</span><span class="t" style="left:1435.7px;top:129px;font-size:23px;line-height:34px;color:#fff;font-family:'Liberation Sans', sans-serif;white-space:pre;-webkit-text-stroke:0.4px #fff;letter-spacing:-0.171px;">Undo</span><svg style="left:1504.1px;top:130.5px;" width="31" height="31" viewBox="0 0 16 16" fill="none"><path d="M8.85 1.05 H4.5 A2 2 0 0 0 2.5 3.05 V12.9 A2 2 0 0 0 4.5 14.9 H11.55 A2 2 0 0 0 13.55 12.9 V5.75 L8.85 1.05 Z M7.95 4.9 V9.5 M5.65 7.2 H10.25 M5.65 11.65 H10.25" stroke="#fff" stroke-width="1.15" stroke-linecap="round" stroke-linejoin="round"/></svg><div style="left:1260px;top:1446px;width:434px;height:64px;background:#0078d4;border-radius:5px;box-shadow:0 3px 10px rgba(0,0,0,0.35);"></div><span class="t" style="left:1279px;top:1461.5px;font-size:24px;line-height:34px;color:#fff;font-family:'Liberation Sans', sans-serif;white-space:pre;-webkit-text-stroke:0.4px #fff;letter-spacing:-0.391px;">Keep</span><span class="t" style="left:1355.7px;top:1461.5px;font-size:24px;line-height:34px;color:#fff;font-family:'Liberation Sans', sans-serif;white-space:pre;-webkit-text-stroke:0.4px #fff;letter-spacing:0.406px;">Undo</span><svg style="left:1434.6px;top:1462.0px;" width="32" height="32" viewBox="0 0 16 16" fill="none"><path d="M8.85 1.05 H4.5 A2 2 0 0 0 2.5 3.05 V12.9 A2 2 0 0 0 4.5 14.9 H11.55 A2 2 0 0 0 13.55 12.9 V5.75 L8.85 1.05 Z M7.95 4.9 V9.5 M5.65 7.2 H10.25 M5.65 11.65 H10.25" stroke="#fff" stroke-width="1.1" stroke-linecap="round" stroke-linejoin="round"/></svg><div style="left:1485px;top:1462px;width:2px;height:31px;background:rgba(255,255,255,0.4);"></div><span class="t" style="left:1506.8px;top:1461.5px;font-size:24px;line-height:34px;color:#fff;font-family:'Liberation Sans', sans-serif;white-space:pre;-webkit-text-stroke:0.3px #fff;letter-spacing:0.576px;">2 of 2</span><svg style="left:1591.7px;top:1462.0px;" width="32" height="32" viewBox="0 0 16 16" fill="none"><path d="M8 13.4 V5 M3.4 9.6 L8 5 L12.6 9.6" stroke="#fff" stroke-width="1" stroke-linecap="round" stroke-linejoin="round"/></svg><svg style="left:1643.5px;top:1462.0px;" width="32" height="32" viewBox="0 0 16 16" fill="none"><path d="M8 2.4 V13.6 M3.4 9 L8 13.6 L12.6 9" stroke="#fff" stroke-width="1" stroke-linecap="round" stroke-linejoin="round"/></svg><div style="left:1856px;top:109.5px;width:9.6px;height:9.6px;border-radius:5px;border:1.7px solid #c4c4c4;"></div><span class="t" style="left:1880.5px;top:96px;font-size:26px;line-height:36px;color:#cccccc;font-family:'Liberation Sans', sans-serif;white-space:pre;-webkit-text-stroke:0.45px #cccccc;letter-spacing:0.006px;">Tagline "Eat. Win. Repeat."</span><div style="left:1856px;top:152.0px;width:9.6px;height:9.6px;border-radius:5px;border:1.7px solid #c4c4c4;"></div><span class="t" style="left:1880.5px;top:138.5px;font-size:26px;line-height:36px;color:#cccccc;font-family:'Liberation Sans', sans-serif;white-space:pre;-webkit-text-stroke:0.45px #cccccc;letter-spacing:0.642px;">Hero image section with a rounded storefront image</span><div style="left:1856px;top:191.0px;width:9.6px;height:9.6px;border-radius:5px;border:1.7px solid #c4c4c4;"></div><span class="t" style="left:1880.5px;top:177.5px;font-size:26px;line-height:36px;color:#cccccc;font-family:'Liberation Sans', sans-serif;white-space:pre;-webkit-text-stroke:0.45px #cccccc;letter-spacing:0.754px;">Two-column layout with descriptive text on the left and the signup form on the right</span><div style="left:1856px;top:230.0px;width:9.6px;height:9.6px;border-radius:5px;border:1.7px solid #c4c4c4;"></div><span class="t" style="left:1880.5px;top:216.5px;font-size:26px;line-height:36px;color:#cccccc;font-family:'Liberation Sans', sans-serif;white-space:pre;-webkit-text-stroke:0.45px #cccccc;letter-spacing:0.378px;">Uses Canopy elements (</span><div class="chip" style="left:2173.5px;top:217px;width:171px;"></div><span class="t" style="left:2179.8px;top:218px;font-size:26px;line-height:34px;color:#cccccc;font-family:'Liberation Mono', monospace;white-space:pre;-webkit-text-stroke:0.3px;letter-spacing:-1.204px;">cms_heading</span><span class="t" style="left:2344.5px;top:216.5px;font-size:26px;line-height:36px;color:#cccccc;font-family:'Liberation Sans', sans-serif;white-space:pre;-webkit-text-stroke:0.45px #cccccc;letter-spacing:0.273px;">, </span><div class="chip" style="left:2359.5px;top:217px;width:127px;"></div><span class="t" style="left:2365.4px;top:218px;font-size:26px;line-height:34px;color:#cccccc;font-family:'Liberation Mono', monospace;white-space:pre;-webkit-text-stroke:0.3px;letter-spacing:-1.204px;">cms_text</span><span class="t" style="left:2486.5px;top:216.5px;font-size:26px;line-height:36px;color:#cccccc;font-family:'Liberation Sans', sans-serif;white-space:pre;-webkit-text-stroke:0.45px #cccccc;letter-spacing:-0.227px;">, </span><div class="chip" style="left:2500.5px;top:217px;width:142px;"></div><span class="t" style="left:2506.7px;top:218px;font-size:26px;line-height:34px;color:#cccccc;font-family:'Liberation Mono', monospace;white-space:pre;-webkit-text-stroke:0.3px;letter-spacing:-1.204px;">cms_image</span><span class="t" style="left:2642.5px;top:216.5px;font-size:26px;line-height:36px;color:#cccccc;font-family:'Liberation Sans', sans-serif;white-space:pre;-webkit-text-stroke:0.45px #cccccc;letter-spacing:0.273px;">, </span><div class="chip" style="left:2657.5px;top:217px;width:127px;"></div><span class="t" style="left:2663.4px;top:218px;font-size:26px;line-height:34px;color:#cccccc;font-family:'Liberation Mono', monospace;white-space:pre;-webkit-text-stroke:0.3px;letter-spacing:-1.204px;">cms_list</span><span class="t" style="left:2784.5px;top:216.5px;font-size:26px;line-height:36px;color:#cccccc;font-family:'Liberation Sans', sans-serif;white-space:pre;-webkit-text-stroke:0.45px #cccccc;letter-spacing:0.641px;">) for CMS</span><span class="t" style="left:1880.5px;top:255.5px;font-size:26px;line-height:36px;color:#cccccc;font-family:'Liberation Sans', sans-serif;white-space:pre;-webkit-text-stroke:0.45px #cccccc;letter-spacing:0.872px;">editability</span><span class="t" style="left:1802.5px;top:295px;font-size:26px;line-height:36px;color:#cccccc;font-family:'Liberation Sans', sans-serif;white-space:pre;-webkit-text-stroke:0.45px #cccccc;letter-spacing:0.156px;">2.</span><span class="t" style="left:1832.5px;top:295px;font-size:26px;line-height:36px;color:#cccccc;font-family:'Liberation Sans', sans-serif;white-space:pre;font-weight:700;letter-spacing:0.333px;">Form component</span><span class="t" style="left:2049.5px;top:295px;font-size:26px;line-height:36px;color:#cccccc;font-family:'Liberation Sans', sans-serif;white-space:pre;-webkit-text-stroke:0.45px #cccccc;">:</span><div style="left:2068px;top:294px;width:321px;height:37px;border:2px solid #3a3a3a;border-radius:7px;"></div><svg style="left:2081.64px;top:307.35px;" width="12.709999999999999" height="9.3" viewBox="0 0 22 16" fill="none"><path d="M7.5 1.5 L2 8 L7.5 14.5 M14.5 1.5 L20 8 L14.5 14.5" stroke="#e37933" stroke-width="2.3" stroke-linecap="butt" stroke-linejoin="miter" fill="none"/></svg><span class="t" style="left:2106px;top:295.5px;font-size:26px;line-height:36px;color:#cccccc;font-family:'Liberation Sans', sans-serif;white-space:pre;-webkit-text-stroke:0.45px #cccccc;letter-spacing:0.864px;">get-burger-list.canvas</span><div style="left:1856px;top:347.5px;width:9.6px;height:9.6px;border-radius:5px;border:1.7px solid #c4c4c4;"></div><span class="t" style="left:1880.5px;top:334px;font-size:26px;line-height:36px;color:#cccccc;font-family:'Liberation Sans', sans-serif;white-space:pre;-webkit-text-stroke:0.45px #cccccc;letter-spacing:0.734px;">Styled form fields with the golden background (</span><div class="chip" style="left:2455.5px;top:334.5px;width:113px;"></div><span class="t" style="left:2461.6px;top:335.5px;font-size:26px;line-height:34px;color:#cccccc;font-family:'Liberation Mono', monospace;white-space:pre;-webkit-text-stroke:0.3px;letter-spacing:-1.203px;">#f8be66</span><span class="t" style="left:2568.5px;top:334px;font-size:27.28px;line-height:36px;color:#cccccc;font-family:'Liberation Sans', sans-serif;white-space:pre;-webkit-text-stroke:0.45px #cccccc;letter-spacing:0.906px;">)</span><div style="left:1856px;top:387.0px;width:9.6px;height:9.6px;border-radius:5px;border:1.7px solid #c4c4c4;"></div><span class="t" style="left:1880.5px;top:373.5px;font-size:26px;line-height:36px;color:#cccccc;font-family:'Liberation Sans', sans-serif;white-space:pre;-webkit-text-stroke:0.45px #cccccc;letter-spacing:0.556px;">Red border inputs matching the Figma design</span><div style="left:1856px;top:426.0px;width:9.6px;height:9.6px;border-radius:5px;border:1.7px solid #c4c4c4;"></div><span class="t" style="left:1880.5px;top:412.5px;font-size:26px;line-height:36px;color:#cccccc;font-family:'Liberation Sans', sans-serif;white-space:pre;-webkit-text-stroke:0.45px #cccccc;letter-spacing:0.770px;">"Get on the Burger List" submit button with the secondary (red) color</span><span class="t" style="left:1777px;top:479.5px;font-size:31px;line-height:44px;color:#d0d0d0;font-family:'Liberation Sans', sans-serif;white-space:pre;font-weight:700;letter-spacing:0.196px;">Blutui CMS Resources Created</span><span class="t" style="left:1802.5px;top:548px;font-size:25.06px;line-height:36px;color:#cccccc;font-family:'Liberation Sans', sans-serif;white-space:pre;-webkit-text-stroke:0.45px #cccccc;letter-spacing:-0.445px;">1.</span><span class="t" style="left:1832.5px;top:548px;font-size:26px;line-height:36px;color:#cccccc;font-family:'Liberation Sans', sans-serif;white-space:pre;font-weight:700;">Form</span><span class="t" style="left:1897.5px;top:548px;font-size:27.32px;line-height:36px;color:#cccccc;font-family:'Liberation Sans', sans-serif;white-space:pre;-webkit-text-stroke:0.45px #cccccc;letter-spacing:0.906px;"> (</span><div class="chip" style="left:1916px;top:548.5px;width:300px;"></div><span class="t" style="left:1922.0px;top:549.5px;font-size:26px;line-height:34px;color:#cccccc;font-family:'Liberation Mono', monospace;white-space:pre;-webkit-text-stroke:0.3px;letter-spacing:-1.203px;">get-burger-list-form</span><span class="t" style="left:2216.0px;top:548px;font-size:26px;line-height:36px;color:#cccccc;font-family:'Liberation Sans', sans-serif;white-space:pre;-webkit-text-stroke:0.45px #cccccc;letter-spacing:0.055px;">):</span><div style="left:1856px;top:602.0px;width:9.6px;height:9.6px;border-radius:5px;border:1.7px solid #c4c4c4;"></div><span class="t" style="left:1880.5px;top:588.5px;font-size:26px;line-height:36px;color:#cccccc;font-family:'Liberation Sans', sans-serif;white-space:pre;-webkit-text-stroke:0.45px #cccccc;letter-spacing:0.541px;">First Name (text, required)</span><div style="left:1856px;top:641.0px;width:9.6px;height:9.6px;border-radius:5px;border:1.7px solid #c4c4c4;"></div><span class="t" style="left:1880.5px;top:627.5px;font-size:26px;line-height:36px;color:#cccccc;font-family:'Liberation Sans', sans-serif;white-space:pre;-webkit-text-stroke:0.45px #cccccc;letter-spacing:0.538px;">Last Name (text, required)</span><div style="left:1856px;top:679.5px;width:9.6px;height:9.6px;border-radius:5px;border:1.7px solid #c4c4c4;"></div><span class="t" style="left:1880.5px;top:666px;font-size:26px;line-height:36px;color:#cccccc;font-family:'Liberation Sans', sans-serif;white-space:pre;-webkit-text-stroke:0.45px #cccccc;letter-spacing:0.379px;">Email address (email, required)</span><div style="left:1856px;top:718.5px;width:9.6px;height:9.6px;border-radius:5px;border:1.7px solid #c4c4c4;"></div><span class="t" style="left:1880.5px;top:705px;font-size:26px;line-height:36px;color:#cccccc;font-family:'Liberation Sans', sans-serif;white-space:pre;-webkit-text-stroke:0.45px #cccccc;letter-spacing:0.557px;">Phone Number (tel, optional)</span><div style="left:1856px;top:757.5px;width:9.6px;height:9.6px;border-radius:5px;border:1.7px solid #c4c4c4;"></div><span class="t" style="left:1880.5px;top:744px;font-size:26px;line-height:36px;color:#cccccc;font-family:'Liberation Sans', sans-serif;white-space:pre;-webkit-text-stroke:0.45px #cccccc;letter-spacing:0.678px;">Spam detection enabled with score threshold of 5</span><div style="left:1856px;top:796.5px;width:9.6px;height:9.6px;border-radius:5px;border:1.7px solid #c4c4c4;"></div><span class="t" style="left:1880.5px;top:783px;font-size:26px;line-height:36px;color:#cccccc;font-family:'Liberation Sans', sans-serif;white-space:pre;-webkit-text-stroke:0.45px #cccccc;letter-spacing:0.558px;">Submissions stored for review</span><span class="t" style="left:1802.5px;top:822.5px;font-size:26px;line-height:36px;color:#cccccc;font-family:'Liberation Sans', sans-serif;white-space:pre;-webkit-text-stroke:0.45px #cccccc;letter-spacing:0.156px;">2.</span><span class="t" style="left:1832.5px;top:822.5px;font-size:26px;line-height:36px;color:#cccccc;font-family:'Liberation Sans', sans-serif;white-space:pre;font-weight:700;letter-spacing:0.461px;">Page</span><span class="t" style="left:1896.5px;top:822.5px;font-size:26px;line-height:36px;color:#cccccc;font-family:'Liberation Sans', sans-serif;white-space:pre;-webkit-text-stroke:0.45px #cccccc;">:</span><div style="left:1856px;top:875.0px;width:9.6px;height:9.6px;border-radius:5px;border:1.7px solid #c4c4c4;"></div><span class="t" style="left:1880.5px;top:861.5px;font-size:26px;line-height:36px;color:#cccccc;font-family:'Liberation Sans', sans-serif;white-space:pre;-webkit-text-stroke:0.45px #cccccc;letter-spacing:0.613px;">Name: "Get on the Burger List"</span><div style="left:1856px;top:914.0px;width:9.6px;height:9.6px;border-radius:5px;border:1.7px solid #c4c4c4;"></div><span class="t" style="left:1880.5px;top:900.5px;font-size:25.57px;line-height:36px;color:#cccccc;font-family:'Liberation Sans', sans-serif;white-space:pre;-webkit-text-stroke:0.45px #cccccc;letter-spacing:-0.447px;">URI: </span><div class="chip" style="left:1936.5px;top:901px;width:345px;"></div><span class="t" style="left:1943.4px;top:902px;font-size:26px;line-height:34px;color:#cccccc;font-family:'Liberation Mono', monospace;white-space:pre;-webkit-text-stroke:0.3px;letter-spacing:-1.203px;">/get-on-the-burger-list</span><div style="left:1856px;top:953.5px;width:9.6px;height:9.6px;border-radius:5px;border:1.7px solid #c4c4c4;"></div><span class="t" style="left:1880.5px;top:940px;font-size:26px;line-height:36px;color:#cccccc;font-family:'Liberation Sans', sans-serif;white-space:pre;-webkit-text-stroke:0.45px #cccccc;letter-spacing:0.574px;">SEO Title: "Get on the Burger List - Hugo and Francs Burgertorium"</span><div style="left:1856px;top:992.5px;width:9.6px;height:9.6px;border-radius:5px;border:1.7px solid #c4c4c4;"></div><span class="t" style="left:1880.5px;top:979px;font-size:26px;line-height:36px;color:#cccccc;font-family:'Liberation Sans', sans-serif;white-space:pre;-webkit-text-stroke:0.45px #cccccc;letter-spacing:0.545px;">SEO Description: "Join the burger list to be first in line for exclusive opening day</span><span class="t" style="left:1880.5px;top:1018px;font-size:26px;line-height:36px;color:#cccccc;font-family:'Liberation Sans', sans-serif;white-space:pre;-webkit-text-stroke:0.45px #cccccc;letter-spacing:0.527px;">offers, free burgers, and VIP access to Hugo &amp; Francs Burgertorium. Sign up now</span><span class="t" style="left:1880.5px;top:1056.5px;font-size:26px;line-height:36px;color:#cccccc;font-family:'Liberation Sans', sans-serif;white-space:pre;-webkit-text-stroke:0.45px #cccccc;letter-spacing:0.598px;">and eat, win, repeat!"</span><div style="left:1856px;top:1109.0px;width:9.6px;height:9.6px;border-radius:5px;border:1.7px solid #c4c4c4;"></div><span class="t" style="left:1880.5px;top:1095.5px;font-size:26px;line-height:36px;color:#cccccc;font-family:'Liberation Sans', sans-serif;white-space:pre;-webkit-text-stroke:0.45px #cccccc;letter-spacing:0.602px;">Active and published</span><span class="t" style="left:1777px;top:1161px;font-size:25.94px;line-height:36px;color:#cccccc;font-family:'Liberation Sans', sans-serif;white-space:pre;-webkit-text-stroke:0.45px #cccccc;letter-spacing:-0.449px;">Run </span><div class="chip" style="left:1830px;top:1161.5px;width:185px;"></div><span class="t" style="left:1836.1px;top:1162.5px;font-size:26px;line-height:34px;color:#cccccc;font-family:'Liberation Mono', monospace;white-space:pre;-webkit-text-stroke:0.3px;letter-spacing:-1.203px;">courier push</span><span class="t" style="left:2015px;top:1161px;font-size:26px;line-height:36px;color:#cccccc;font-family:'Liberation Sans', sans-serif;white-space:pre;-webkit-text-stroke:0.45px #cccccc;letter-spacing:0.675px;"> to sync the local files to your Blutui project.</span><svg style="left:1782.0px;top:1217.0px;" width="32" height="32" viewBox="0 0 16 16" fill="none"><path d="M13.8 8.5 A5.85 5.85 0 1 1 13.3 5 M13.3 1.9 V5 H10.1" stroke="#cccccc" stroke-width="1" stroke-linecap="round" stroke-linejoin="round"/></svg><svg style="left:1834.5px;top:1217.0px;" width="32" height="32" viewBox="0 0 16 16" fill="none"><path d="M2.9 2.2 V7.55 H8.25 M2.9 7.55 L7.18 3.43 A3.7 3.7 0 0 1 12.42 8.67 L7.2 13.9" stroke="#cccccc" stroke-width="1" stroke-linecap="round" stroke-linejoin="round"/></svg><svg style="left:1886.0px;top:1217.0px;" width="32" height="32" viewBox="0 0 16 16" fill="none"><path d="M4.55 6.7 V14.4 M4.55 6.7 H5.6 C6.6 6.7 7 6 7.4 5 L8.3 2.5 C8.6 1.6 9.6 1.3 10.2 2 C10.8 2.7 10.7 3.6 10.5 4.4 L10 6.7 H13 A1.6 1.6 0 0 1 14.5 8.7 L13.1 13 A2 2 0 0 1 11.2 14.4 H2.9 A1.5 1.5 0 0 1 1.4 12.9 V8.2 A1.5 1.5 0 0 1 2.9 6.7 H4.55" stroke="#cccccc" stroke-width="1" stroke-linecap="round" stroke-linejoin="round"/></svg><svg style="left:1937.5px;top:1217.0px;" width="32" height="32" viewBox="0 0 16 16" fill="none"><g transform="rotate(180 8.1 8)"><path d="M4.55 6.7 V14.4 M4.55 6.7 H5.6 C6.6 6.7 7 6 7.4 5 L8.3 2.5 C8.6 1.6 9.6 1.3 10.2 2 C10.8 2.7 10.7 3.6 10.5 4.4 L10 6.7 H13 A1.6 1.6 0 0 1 14.5 8.7 L13.1 13 A2 2 0 0 1 11.2 14.4 H2.9 A1.5 1.5 0 0 1 1.4 12.9 V8.2 A1.5 1.5 0 0 1 2.9 6.7 H4.55" stroke="#cccccc" stroke-width="1" stroke-linecap="round" stroke-linejoin="round"/></g></svg><div style="left:1744px;top:6px;width:1174px;height:114px;background:#181818;"></div><div style="left:1744px;top:120px;width:1174px;height:7px;background:linear-gradient(180deg,rgba(0,0,0,0.55),rgba(0,0,0,0));"></div><span class="t" style="left:1784.5px;top:26.5px;font-size:22px;line-height:30px;color:#cccccc;font-family:'Liberation Sans', sans-serif;white-space:pre;-webkit-text-stroke:0.45px #cccccc;letter-spacing:0.059px;">CHAT</span><div style="left:1780px;top:62px;width:68px;height:2px;background:#0078d4;"></div><svg style="left:2611.0px;top:24.0px;" width="32" height="32" viewBox="0 0 16 16" fill="none"><path d="M8 2.05 V13.95 M2.05 8 H13.95" stroke="#cccccc" stroke-width="1" stroke-linecap="round" stroke-linejoin="round"/></svg><svg style="left:2644.0px;top:25.5px;" width="32" height="32" viewBox="0 0 16 16" fill="none"><path d="M4.3 6.1 L8 9.9 L11.7 6.1" stroke="#cccccc" stroke-width="1" stroke-linecap="round" stroke-linejoin="round"/></svg><svg style="left:2690.0px;top:25.0px;" width="32" height="32" viewBox="0 0 16 16" fill="none"><path d="M6.69 1.84 L9.31 1.84 L9.55 3.56 L11.07 4.44 L12.68 3.78 L13.99 6.05 L12.62 7.12 L12.62 8.88 L13.99 9.95 L12.68 12.22 L11.07 11.56 L9.55 12.44 L9.31 14.16 L6.69 14.16 L6.45 12.44 L4.93 11.56 L3.32 12.22 L2.01 9.95 L3.38 8.88 L3.38 7.12 L2.01 6.05 L3.32 3.78 L4.93 4.44 L6.45 3.56 Z" stroke="#cccccc" stroke-width="1" stroke-linecap="round" stroke-linejoin="round" stroke-linejoin="round"/><circle cx="8" cy="8" r="1.7" stroke="#cccccc" stroke-width="1" stroke-linecap="round" stroke-linejoin="round"/></svg><svg style="left:2742.0px;top:24.8px;" width="32" height="32" viewBox="0 0 16 16" fill="none"><circle cx="4" cy="8" r="1.05" fill="#cccccc"/><circle cx="8" cy="8" r="1.05" fill="#cccccc"/><circle cx="12" cy="8" r="1.05" fill="#cccccc"/></svg><div style="left:2796px;top:26px;width:2px;height:31px;background:#4a4a4a;"></div><svg style="left:2820.0px;top:24.8px;" width="32" height="32" viewBox="0 0 16 16" fill="none"><path d="M2.6 5.8 V4.4 A1.8 1.8 0 0 1 4.4 2.6 H5.8 M10.2 2.6 H11.6 A1.8 1.8 0 0 1 13.4 4.4 V5.8 M13.4 10.2 V11.6 A1.8 1.8 0 0 1 11.6 13.4 H10.2 M5.8 13.4 H4.4 A1.8 1.8 0 0 1 2.6 11.6 V10.2" stroke="#cccccc" stroke-width="1" stroke-linecap="round" stroke-linejoin="round"/></svg><svg style="left:2872.0px;top:24.8px;" width="32" height="32" viewBox="0 0 16 16" fill="none"><path d="M3.55 3.55 L12.45 12.45 M12.45 3.55 L3.55 12.45" stroke="#cccccc" stroke-width="1" stroke-linecap="round" stroke-linejoin="round"/></svg><svg style="left:1782.0px;top:82.0px;" width="32" height="32" viewBox="0 0 16 16" fill="none"><path d="M14 8 H2.2 M7.2 3 L2.2 8 L7.2 13" stroke="#cccccc" stroke-width="1" stroke-linecap="round" stroke-linejoin="round"/></svg><span class="t" style="left:1826.5px;top:83.5px;font-size:22px;line-height:30px;color:#cccccc;font-family:'Liberation Sans', sans-serif;white-space:pre;font-weight:700;letter-spacing:0.258px;">CREATING "GET ON THE BURGER LIST" PAGE IN BLUTUI</span><svg style="left:2872.0px;top:82.0px;" width="32" height="32" viewBox="0 0 16 16" fill="none"><rect x="1.8" y="1.75" width="12.4" height="12.5" rx="2.4" stroke="#cccccc" stroke-width="1" stroke-linecap="round" stroke-linejoin="round"/><path d="M9.55 1.75 V14.25" stroke="#cccccc" stroke-width="1" stroke-linecap="round" stroke-linejoin="round"/></svg><div style="left:1776px;top:1280px;width:1126px;height:246px;border:2px solid #3c3c3c;border-radius:9px;background:#313131;overflow:hidden;"><div style="left:0;top:0;width:1122px;height:61px;background:#1f1f1f;border-bottom:2px solid #3c3c3c;"></div></div><svg style="left:1790.5px;top:1296.5px;" width="32" height="32" viewBox="0 0 16 16" fill="none"><path d="M5.6 2.9 L10.8 8 L5.6 13.1" stroke="#cccccc" stroke-width="1" stroke-linecap="round" stroke-linejoin="round"/></svg><span class="t" style="left:1829px;top:1294.5px;font-size:24px;line-height:36px;color:#cccccc;font-family:'Liberation Sans', sans-serif;white-space:pre;-webkit-text-stroke:0.45px #cccccc;letter-spacing:-0.097px;">2 files changed</span><span class="t" style="left:2001.5px;top:1294.5px;font-size:23.0px;line-height:36px;color:#54b06b;font-family:'Liberation Sans', sans-serif;white-space:pre;-webkit-text-stroke:0.45px #54b06b;letter-spacing:-0.453px;">+121</span><span class="t" style="left:2060px;top:1294.5px;font-size:24px;line-height:36px;color:#e5793a;font-family:'Liberation Sans', sans-serif;white-space:pre;-webkit-text-stroke:0.45px #e5793a;letter-spacing:0.328px;">-2</span><div style="left:2661px;top:1294px;width:81px;height:36px;background:#0078d4;border-radius:4px;border:1px solid #1a86dc;"></div><span class="t" style="left:2676px;top:1294px;font-size:22px;line-height:36px;color:#fff;font-family:'Liberation Sans', sans-serif;white-space:pre;-webkit-text-stroke:0.3px #fff;letter-spacing:0.152px;">Keep</span><div style="left:2754px;top:1294px;width:84px;height:36px;background:#313131;border-radius:4px;border:2px solid #454545;"></div><span class="t" style="left:2768.5px;top:1294px;font-size:22px;line-height:36px;color:#cccccc;font-family:'Liberation Sans', sans-serif;white-space:pre;-webkit-text-stroke:0.45px #cccccc;letter-spacing:0.852px;">Undo</span><svg style="left:2853.0px;top:1296.5px;" width="32" height="32" viewBox="0 0 16 16" fill="none"><path d="M8.6 0.3 H3.6 A1.8 1.8 0 0 0 1.8 2.1 V11.4 A1.8 1.8 0 0 0 3.6 13.2 H10.2 A1.8 1.8 0 0 0 12 11.4 V3.7 L8.6 0.3 Z M6.9 3.4 V7.6 M4.8 5.5 H9 M4.8 10 H9 M14 5.8 V12.4 A2.8 2.8 0 0 1 11.2 15.2 H5" stroke="#cccccc" stroke-width="1" stroke-linecap="round" stroke-linejoin="round"/></svg><div style="left:1790px;top:1357px;width:47px;height:38px;border:2px solid #4a4a4a;border-radius:8px;"></div><svg style="left:1797.5px;top:1360.0px;" width="32" height="32" viewBox="0 0 32 32" fill="none"><path d="M7 16.1 L16.1 7 A5.19 5.19 0 0 1 23.4 14.35 L13.25 24.5 A2.41 2.41 0 0 1 9.85 21.1 L19.4 11.55" stroke="#cccccc" stroke-width="2" stroke-linecap="round" stroke-linejoin="round"/></svg><div style="left:1846px;top:1357px;width:321px;height:38px;border:2px dashed #4a4a4a;border-radius:8px;"></div><svg style="left:1855.0px;top:1364.5px;" width="22" height="22" viewBox="0 0 16 16" fill="none"><path d="M8 2.05 V13.95 M2.05 8 H13.95" stroke="#b0b0b0" stroke-width="1.3" stroke-linecap="round" stroke-linejoin="round"/></svg><svg style="left:1889.79px;top:1369.62px;" width="17.425" height="12.75" viewBox="0 0 22 16" fill="none"><path d="M7.5 1.5 L2 8 L7.5 14.5 M14.5 1.5 L20 8 L14.5 14.5" stroke="#e37933" stroke-width="2.3" stroke-linecap="butt" stroke-linejoin="miter" fill="none"/></svg><span class="t" style="left:1921.5px;top:1359.5px;font-size:25px;line-height:34px;color:#a8a8a8;font-family:'Liberation Sans', sans-serif;white-space:pre;-webkit-text-stroke:0.45px #a8a8a8;font-style:italic;letter-spacing:-0.224px;">get-burger-list.canvas</span><span class="t" style="left:1790.5px;top:1415px;font-size:26px;line-height:36px;color:#838383;font-family:'Liberation Sans', sans-serif;white-space:pre;-webkit-text-stroke:0.45px #838383;letter-spacing:0.660px;">Describe what to build next</span><span class="t" style="left:1802.5px;top:1472px;font-size:24px;line-height:36px;color:#cccccc;font-family:'Liberation Sans', sans-serif;white-space:pre;-webkit-text-stroke:0.45px #cccccc;letter-spacing:-0.344px;">Agent</span><svg style="left:1864.0px;top:1474.5px;" width="32" height="32" viewBox="0 0 16 16" fill="none"><path d="M4.3 6.1 L8 9.9 L11.7 6.1" stroke="#cccccc" stroke-width="1" stroke-linecap="round" stroke-linejoin="round"/></svg><span class="t" style="left:1920.5px;top:1472px;font-size:23.88px;line-height:36px;color:#cccccc;font-family:'Liberation Sans', sans-serif;white-space:pre;-webkit-text-stroke:0.45px #cccccc;letter-spacing:-0.446px;">Claude Opus 4.5</span><svg style="left:2094.0px;top:1474.5px;" width="32" height="32" viewBox="0 0 16 16" fill="none"><path d="M4.3 6.1 L8 9.9 L11.7 6.1" stroke="#cccccc" stroke-width="1" stroke-linecap="round" stroke-linejoin="round"/></svg><svg style="left:2143.5px;top:1474.0px;" width="32" height="32" viewBox="0 0 16 16" fill="none"><path d="M3.35 1.7 A3.3 3.3 0 0 0 3.7 7.7 V13.6 A1.1 1.1 0 0 0 5.9 13.6 V7.7 A3.3 3.3 0 0 0 6.25 1.7 V4.2 A1.45 1.45 0 0 1 3.35 4.2 Z M11.5 8.6 V2.3 A0.8 0.8 0 0 1 12.3 1.5 H12.9 A0.8 0.8 0 0 1 13.7 2.3 V8.6 M10.4 8.6 H14.7 V13 A1.5 1.5 0 0 1 13.2 14.5 H11.9 A1.5 1.5 0 0 1 10.4 13 Z" stroke="#cccccc" stroke-width="1" stroke-linecap="round" stroke-linejoin="round"/></svg><svg style="left:2798.0px;top:1474.0px;" width="32" height="32" viewBox="0 0 16 16" fill="none"><path d="M2.35 12.1 C2.35 9 4.5 7.85 7 7.85 H13.6 M9.5 3.9 L13.7 7.85 L9.5 11.9" stroke="#cccccc" stroke-width="1" stroke-linecap="round" stroke-linejoin="round"/></svg><svg style="left:2850.0px;top:1474.0px;" width="32" height="32" viewBox="0 0 16 16" fill="none"><path d="M1.5 1.6 L14.4 8 L1.5 14.4 L3.2 8 Z M3.2 8 H9" stroke="#6e6e6e" stroke-width="1" stroke-linecap="round" stroke-linejoin="round"/></svg>
</div></body></html>
